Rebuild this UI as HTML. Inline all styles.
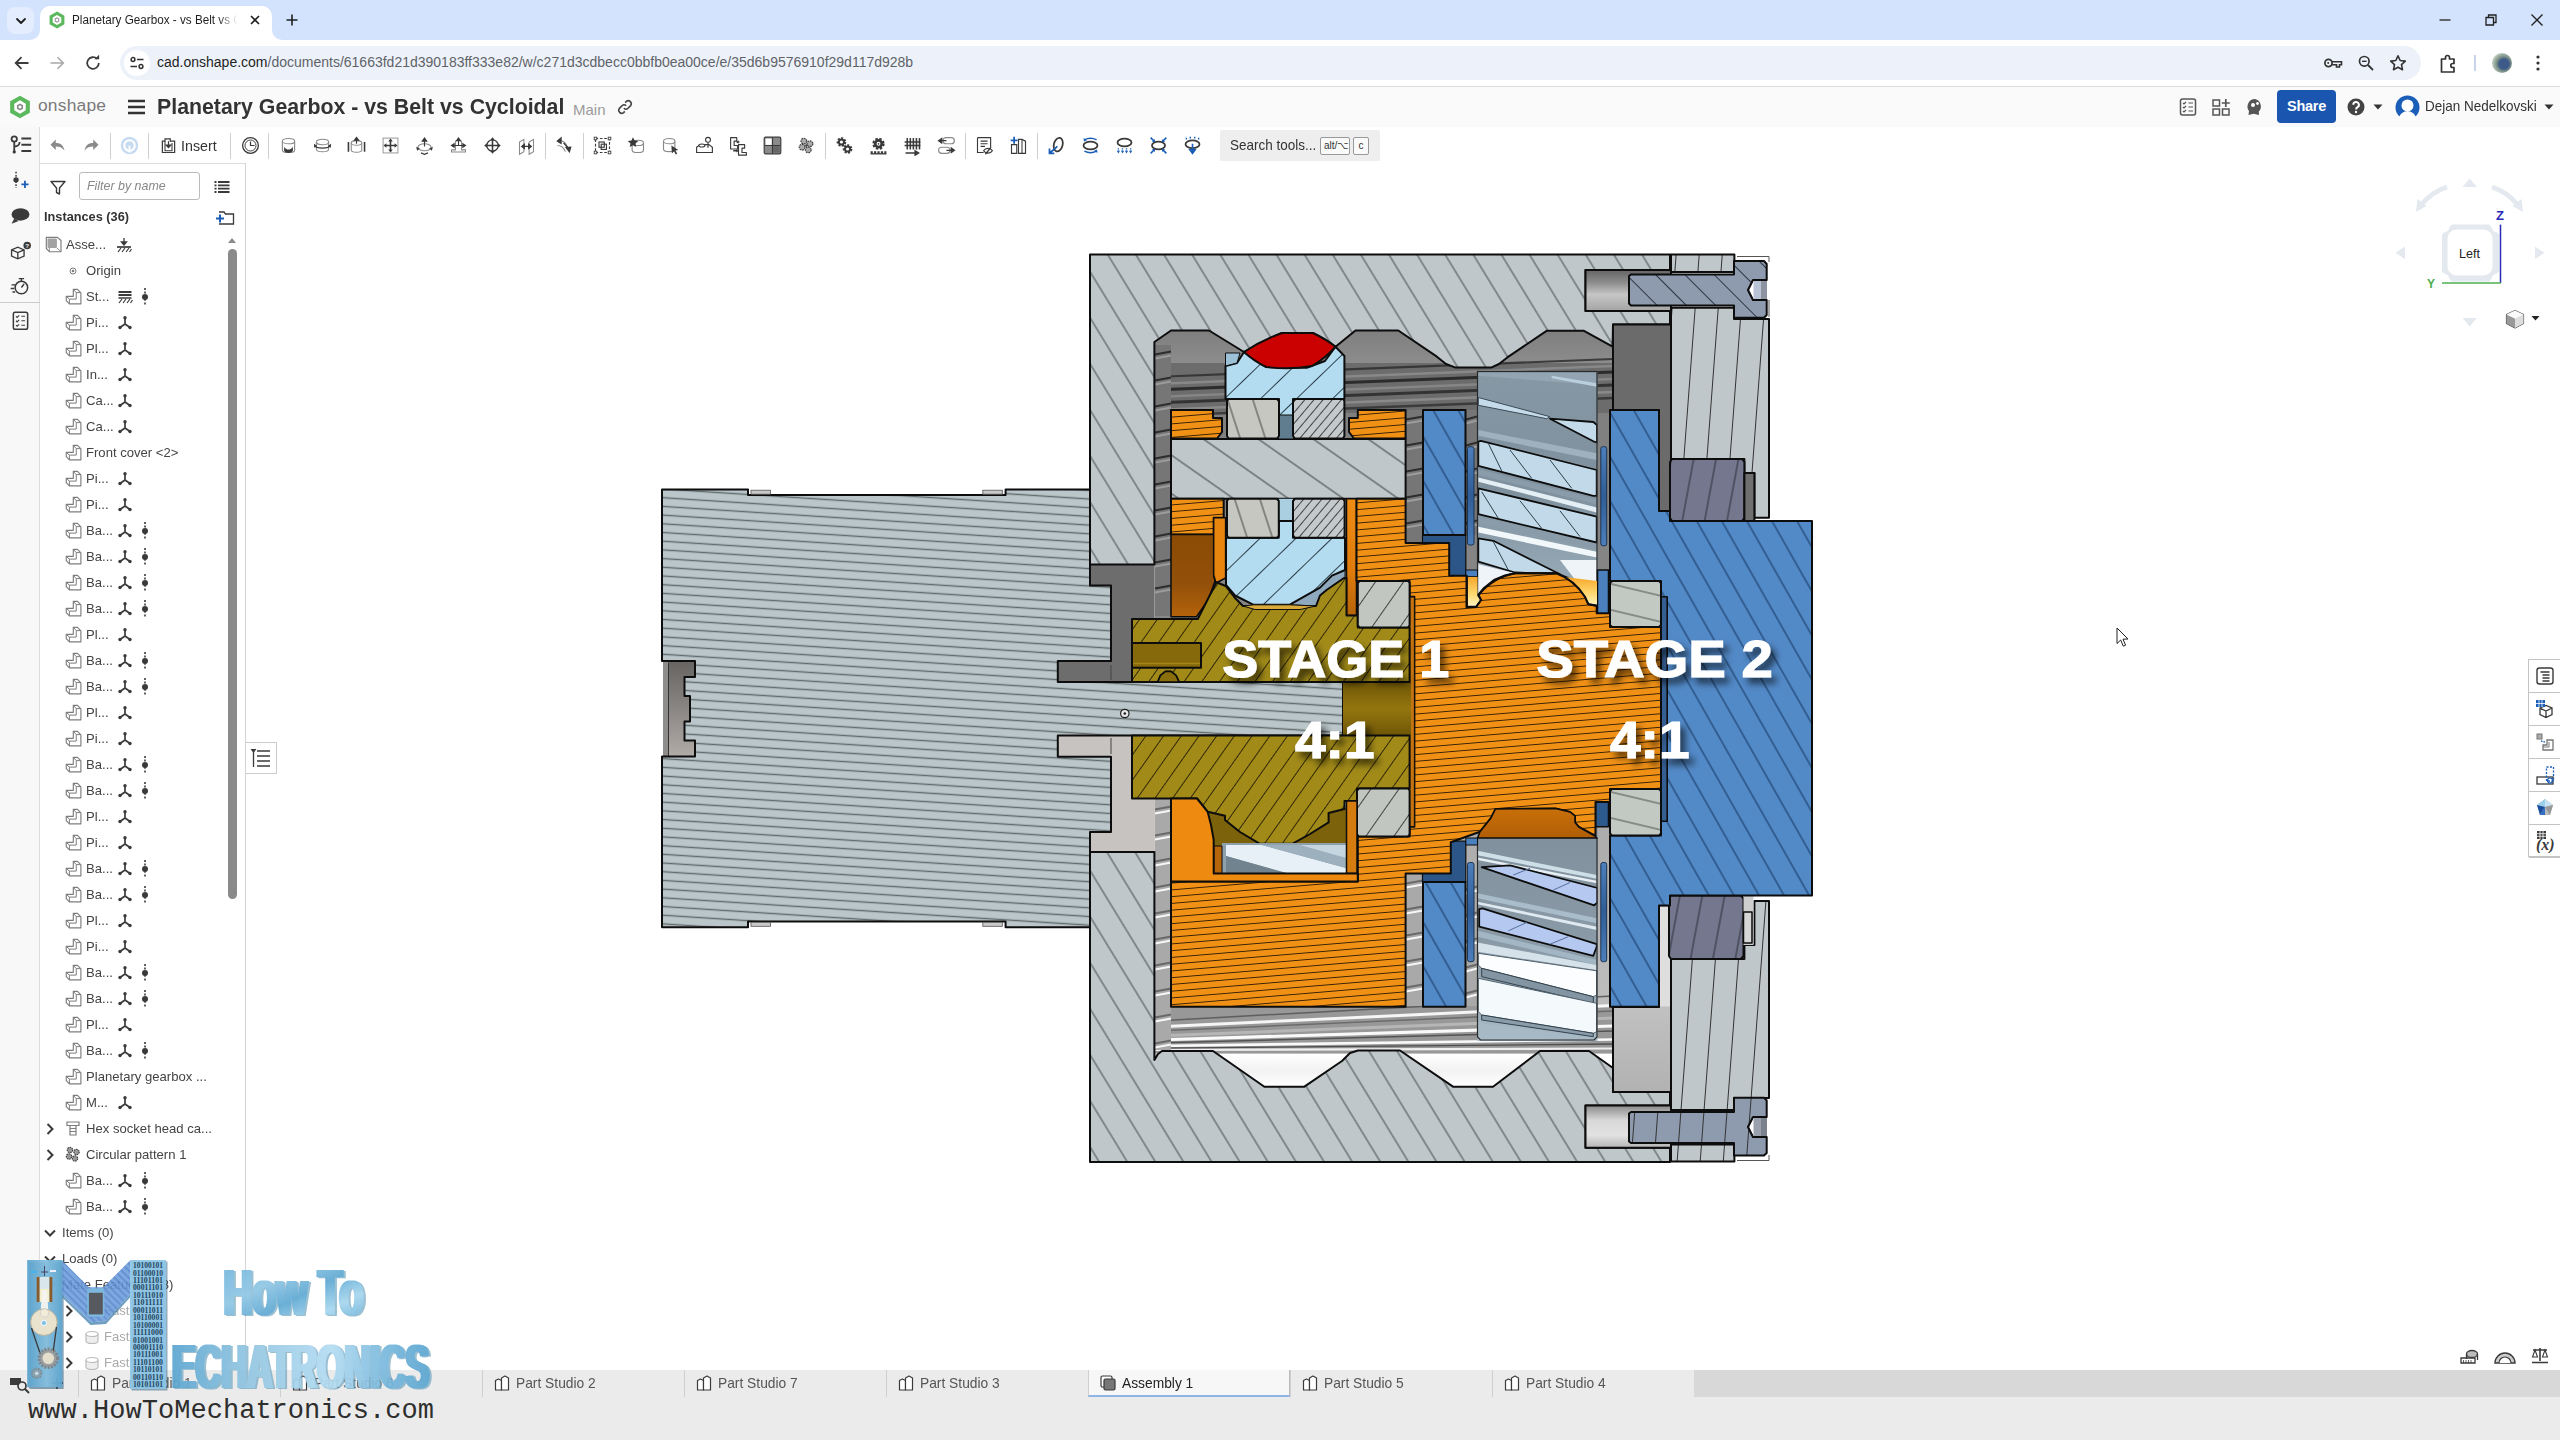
<!DOCTYPE html><html><head><meta charset="utf-8"><title>Planetary Gearbox - vs Belt vs Cycloidal</title><style>
html,body{margin:0;padding:0}
body{width:2560px;height:1440px;position:relative;overflow:hidden;background:#fff;font-family:"Liberation Sans",sans-serif;color:#333}
svg{display:block}

#tabstrip{position:absolute;left:0;top:0;width:2560px;height:40px;background:#d3e3fd}
#tabstrip .tsearch{position:absolute;left:7px;top:7px;width:27px;height:27px;border-radius:8px;background:#e4edfd;display:flex;align-items:center;justify-content:center}
#tabstrip .tab{position:absolute;left:40px;top:6px;width:232px;height:34px;background:#fff;border-radius:10px 10px 0 0}
#tabstrip .curveL{position:absolute;left:-10px;bottom:0}
#tabstrip .curveR{position:absolute;right:-10px;bottom:0}
#tabstrip .fav{position:absolute;left:8px;top:5px}
#tabstrip .ttl{position:absolute;left:32px;top:7px;font-size:12px;color:#1f1f1f;white-space:nowrap;transform-origin:0 50%;transform:scaleX(.975)}
#tabstrip .fade{position:absolute;left:178px;top:4px;width:26px;height:24px;background:linear-gradient(90deg,rgba(255,255,255,0),#fff 75%)}
#tabstrip .tx{position:absolute;left:209px;top:8px}
#tabstrip .plus{position:absolute;left:285px;top:13px}
#tabstrip .wmin{position:absolute;left:2438px;top:13px}
#tabstrip .wmax{position:absolute;left:2484px;top:13px}
#tabstrip .wcls{position:absolute;left:2530px;top:13px}
#urlrow{position:absolute;left:0;top:40px;width:2560px;height:46px;background:#fff;border-bottom:1px solid #dcdcdc}
#urlrow .nb{position:absolute;top:13px}
#urlrow .omni{position:absolute;left:120px;top:6px;width:2301px;height:34px;border-radius:17px;background:#edf2fa}
#urlrow .site{position:absolute;left:4px;top:4px;width:26px;height:26px;border-radius:13px;background:#fff;display:flex;align-items:center;justify-content:center}
#urlrow .url{position:absolute;left:37px;top:8px;font-size:14px;color:#5f6368;white-space:nowrap}
#urlrow .url b{font-weight:400;color:#1f1f1f}
#urlrow .oi{position:absolute;top:7px}
#urlrow .vsep{position:absolute;left:2474px;top:15px;width:2px;height:16px;background:#c7d4ec}
#urlrow .avatar{position:absolute;left:2492px;top:13px;width:20px;height:20px;border-radius:10px;background:radial-gradient(circle at 60% 55%,#3d5a8a 0 30%,#7a8f86 45%,#b9c9b9 70%,#8fa2a0 100%)}
#oshead{position:absolute;left:0;top:87px;width:2560px;height:40px;background:#fafafa}
#oshead .ologo{position:absolute;left:8px;top:8px}
#oshead .oname{position:absolute;left:38px;top:8px;font-size:17.4px;color:#7a7a7a;letter-spacing:0.2px}
#oshead .hamb{position:absolute;left:127px;top:11px}
#oshead .doct{position:absolute;left:157px;top:8px;font-size:21.5px;font-weight:700;color:#333;white-space:nowrap;transform-origin:0 50%;transform:scaleX(.991)}
#oshead .main{position:absolute;left:573px;top:14px;font-size:15px;color:#9a9a9a}
#oshead .lnk{position:absolute;left:617px;top:12px}
#oshead .hi{position:absolute;top:10px}
#oshead .share{position:absolute;left:2277px;top:3px;width:59px;height:33px;border-radius:4px;background:#1a55b0;color:#fff;font-weight:700;font-size:14.5px;line-height:33px;text-align:center;letter-spacing:-0.3px}
#oshead .uname{position:absolute;left:2425px;top:11px;font-size:14.5px;color:#333;white-space:nowrap;transform-origin:0 50%;transform:scaleX(.93)}

#toolbar{position:absolute;left:40px;top:127px;width:2520px;height:38px;background:#fff}
#toolbar .ti{position:absolute}
#toolbar .ti{margin-left:-40px}
#toolbar .tsep{position:absolute;top:6px;width:1px;height:26px;background:#cfcfcf;margin-left:-40px}
#toolbar .ttxt{position:absolute;top:10px;font-size:15px;color:#333;margin-left:-40px;transform-origin:0 50%;transform:scaleX(.95)}
#toolbar .stools{position:absolute;left:1180px;top:3px;width:160px;height:31px;background:#eee;border-radius:2px;font-size:14.500px;color:#333;white-space:nowrap}
#toolbar .stools span{position:absolute;left:10px;top:7px;transform-origin:0 50%;transform:scaleX(.93)}
#toolbar .stools kbd{position:absolute;top:7px;height:16px;border:1px solid #999;border-radius:2px;background:#fafafa;font-family:"Liberation Sans",sans-serif;font-size:10px;line-height:15px;padding:0 3px;color:#333}
#toolbar .stools kbd:nth-of-type(1){left:100px;width:22px}
#toolbar .stools kbd:nth-of-type(2){left:133px;width:8px;text-align:center}
#rail{position:absolute;left:0;top:127px;width:40px;height:1243px;background:#f8f8f8;border-right:1px solid #ddd;box-sizing:border-box}
#rail svg{position:absolute;left:8px;margin-top:1px}
#rail .rsep{position:absolute;left:0;top:175px;width:40px;height:1px;background:#ccc}

#side{position:absolute;left:40px;top:163px;width:205px;height:1207px;background:#fff;border-right:1px solid #d4d4d4;border-top:1px solid #ddd;box-sizing:content-box;overflow:hidden}
#side .filter{position:absolute;left:39px;top:8px;width:121px;height:28px;border:1px solid #bbb;border-radius:3px;box-sizing:border-box}
#side .filter span{position:absolute;left:7px;top:5px;font-size:13.500px;font-style:italic;color:#888;white-space:nowrap;transform-origin:0 50%;transform:scaleX(.92)}
#side .inst{position:absolute;left:4px;top:45px;font-size:13.500px;font-weight:700;color:#333;white-space:nowrap;transform-origin:0 50%;transform:scaleX(.944)}
#side .row{position:absolute;left:0;width:205px;height:26px}
#side .row .nm{position:absolute;top:5px;font-size:13.500px;color:#444;white-space:nowrap;transform-origin:0 50%;transform:scaleX(.97)}
#side .row .pi{position:absolute;left:24px;top:3px}
#side .row .ic{position:absolute}
#side .row .ch{position:absolute;left:4px;top:6px}
#side .row .chd{position:absolute;left:3px;top:7px}
#side .thumb{position:absolute;left:188px;top:85px;width:9px;height:650px;border-radius:5px;background:#8a8a8a}
#ptoggle{position:absolute;left:246px;top:742px;width:31px;height:32px;border:1px solid #ccc;border-left:none;background:#fff;box-sizing:border-box}
#ptoggle svg{position:absolute;left:4px;top:4px}

#btabs{position:absolute;left:0;top:1370px;width:2560px;height:27px;background:#d8d8d8}
#btabs:before{content:"";position:absolute;left:0;top:0;width:78px;height:27px;background:#ebebeb}
#btabs .bt{position:absolute;top:0;width:202px;height:27px;background:#ebebeb;box-sizing:border-box;border-left:1px solid #cfcfcf}
#btabs .bt svg{position:absolute;left:10px;top:4px}
#btabs .bt span{position:absolute;left:33px;top:5px;font-size:14.500px;color:#555;white-space:nowrap;transform-origin:0 50%;transform:scaleX(.951)}
#btabs .bt.act{background:#f7f7f7;border-bottom:2px solid #8fb4e6;border-right:1px solid #bbb}
#btabs .bt.act span{color:#222}
#bstrip{position:absolute;left:0;top:1397px;width:2560px;height:43px;background:#ebebeb}
#rpanel{position:absolute;left:2528px;top:659px;width:32px;height:198px;background:#fff;border:1px solid #c4c4c4;border-right:none;box-sizing:border-box}
#rpanel .rc{position:absolute;left:0;width:32px;height:33px;border-bottom:1px solid #c4c4c4;box-sizing:border-box}
#rpanel .rc svg{position:absolute;left:4px;top:4px}
</style></head><body>
<div id="tabstrip">
  <div class="tsearch"><svg width="14" height="14" viewBox="0 0 14 14"><path d="M3 5l4 4 4-4" fill="none" stroke="#1f1f1f" stroke-width="1.8" stroke-linecap="round" stroke-linejoin="round"/></svg></div>
  <div class="tab">
    <svg class="curveL" width="10" height="10" viewBox="0 0 10 10"><path d="M10 0V10H0A10 10 0 0 0 10 0Z" fill="#fff"/></svg>
    <svg class="curveR" width="10" height="10" viewBox="0 0 10 10"><path d="M0 0V10H10A10 10 0 0 1 0 0Z" fill="#fff"/></svg>
    <svg class="fav" width="18" height="18" viewBox="0 0 18 18"><polygon points="9,0.5 16.4,4.7 16.4,13.3 9,17.5 1.6,13.3 1.6,4.7" fill="#5cb85c"/><polygon points="9,4 13.3,6.5 13.3,11.5 9,14 4.7,11.5 4.7,6.5" fill="#fff"/><polygon points="9,6.3 11.3,7.6 11.3,10.4 9,11.7 6.7,10.4 6.7,7.6" fill="#9a9a9a"/><polygon points="9,7.6 10.2,8.3 10.2,9.7 9,10.4 7.8,9.7 7.8,8.3" fill="#fff"/></svg>
    <span class="ttl">Planetary Gearbox - vs Belt vs C</span>
    <span class="fade"></span>
    <svg class="tx" width="12" height="12" viewBox="0 0 12 12"><path d="M2 2l8 8M10 2l-8 8" stroke="#1f1f1f" stroke-width="1.6"/></svg>
  </div>
  <svg class="plus" width="14" height="14" viewBox="0 0 14 14"><path d="M7 1.5v11M1.5 7h11" stroke="#1f1f1f" stroke-width="1.6"/></svg>
  <svg class="wmin" width="14" height="14" viewBox="0 0 14 14"><path d="M1.5 7h11" stroke="#1f1f1f" stroke-width="1.3"/></svg>
  <svg class="wmax" width="14" height="14" viewBox="0 0 14 14"><path d="M2 4.5h7.5v7.5H2zM4.5 4.3V2h7.5v7.5H9.7" fill="none" stroke="#1f1f1f" stroke-width="1.3"/></svg>
  <svg class="wcls" width="14" height="14" viewBox="0 0 14 14"><path d="M1.5 1.5l11 11M12.5 1.5l-11 11" stroke="#1f1f1f" stroke-width="1.3"/></svg>
</div>
<div id="urlrow">
  <svg class="nb" style="left:12px" width="20" height="20" viewBox="0 0 20 20"><path d="M16.5 10H4M9.5 4.2L3.7 10l5.8 5.8" fill="none" stroke="#3c3c3c" stroke-width="1.8"/></svg>
  <svg class="nb" style="left:47px" width="20" height="20" viewBox="0 0 20 20"><path d="M3.5 10H16M10.5 4.2l5.8 5.8-5.8 5.8" fill="none" stroke="#a9a9a9" stroke-width="1.6"/></svg>
  <svg class="nb" style="left:83px" width="20" height="20" viewBox="0 0 20 20"><path d="M15.8 10a5.8 5.8 0 1 1-1.7-4.1" fill="none" stroke="#3c3c3c" stroke-width="1.8"/><path d="M11.5 6.3h4.6V1.7z" fill="#3c3c3c"/></svg>
  <div class="omni">
    <div class="site"><svg width="16" height="16" viewBox="0 0 16 16"><circle cx="4" cy="4.5" r="1.9" fill="none" stroke="#333" stroke-width="1.5"/><path d="M8 4.5h6.5" stroke="#333" stroke-width="1.5"/><circle cx="12" cy="11.5" r="1.9" fill="none" stroke="#333" stroke-width="1.5"/><path d="M1.5 11.5h6.5" stroke="#333" stroke-width="1.5"/></svg></div>
    <span class="url"><b>cad.onshape.com</b>/documents/61663fd21d390183ff333e82/w/c271d3cdbecc0bbfb0ea00ce/e/35d6b9576910f29d117d928b</span>
    <svg class="oi" style="left:2203px" width="20" height="20" viewBox="0 0 20 20"><circle cx="5.5" cy="10" r="3.6" fill="none" stroke="#333" stroke-width="1.7"/><circle cx="5.2" cy="10" r="1" fill="#333"/><path d="M9 8.7h9.5v3h-2v2.3h-3v-2.3H9" fill="none" stroke="#333" stroke-width="1.6"/></svg>
    <svg class="oi" style="left:2236px" width="20" height="20" viewBox="0 0 20 20"><circle cx="8.3" cy="8.3" r="4.8" fill="none" stroke="#333" stroke-width="1.7"/><path d="M12 12l5 5" stroke="#333" stroke-width="1.8"/><path d="M6 8.3h4.6" stroke="#333" stroke-width="1.4"/></svg>
    <svg class="oi" style="left:2268px" width="20" height="20" viewBox="0 0 20 20"><path d="M10 2.8l2.2 4.7 5.1.6-3.8 3.5 1 5.1L10 14.200l-4.500 2.500 1-5.100L2.700 8.100l5.100-.6z" fill="none" stroke="#333" stroke-width="1.6" stroke-linejoin="round"/></svg>
  </div>
  <svg class="nb" style="left:2437px" width="22" height="22" viewBox="0 0 22 22"><path d="M8.5 4.5a2 2 0 0 1 4 0V6H17v4.500h-1.200a2 2 0 0 0 0 4H17V19H4.500V6H8.500z" fill="none" stroke="#333" stroke-width="1.7" stroke-linejoin="round"/></svg>
  <div class="vsep"></div>
  <div class="avatar"></div>
  <svg class="nb" style="left:2528px" width="20" height="20" viewBox="0 0 20 20"><circle cx="10" cy="4" r="1.6" fill="#333"/><circle cx="10" cy="10" r="1.6" fill="#333"/><circle cx="10" cy="16" r="1.6" fill="#333"/></svg>
</div>


<div id="oshead">
  <svg class="ologo" width="24" height="24" viewBox="0 0 18 18"><polygon points="9,0.5 16.4,4.7 16.4,13.3 9,17.5 1.6,13.3 1.6,4.7" fill="#5cb85c"/><polygon points="9,4 13.3,6.5 13.3,11.5 9,14 4.7,11.5 4.7,6.5" fill="#fff"/><polygon points="9,6.3 11.3,7.6 11.3,10.4 9,11.7 6.7,10.4 6.7,7.6" fill="#8a8a8a"/><polygon points="9,7.7 10.1,8.35 10.1,9.65 9,10.3 7.9,9.65 7.9,8.35" fill="#fff"/></svg>
  <span class="oname">onshape</span>
  <svg class="hamb" width="20" height="18" viewBox="0 0 20 18"><path d="M1 3h17M1 9h17M1 15h17" stroke="#333" stroke-width="2.6"/></svg>
  <span class="doct">Planetary Gearbox - vs Belt vs Cycloidal</span>
  <span class="main">Main</span>
  <svg class="lnk" width="16" height="16" viewBox="0 0 16 16"><path d="M6.800 9.200a3 3 0 0 0 4.200 0l2.600-2.600a3 3 0 0 0-4.200-4.200L8.200 3.600M9.200 6.800a3 3 0 0 0-4.200 0L2.400 9.400a3 3 0 0 0 4.200 4.200l1.200-1.200" fill="none" stroke="#444" stroke-width="1.6"/></svg>
  <svg class="hi" style="left:2178px" width="20" height="20" viewBox="0 0 20 20"><rect x="2.500" y="2" width="15" height="16" rx="2" fill="none" stroke="#555" stroke-width="1.5"/><path d="M10.500 6h4.500M10.500 10h4.500M10.500 14h4.500M5 6l1 1 2-2M5 10l1 1 2-2M5 14l1 1 2-2" fill="none" stroke="#555" stroke-width="1.2"/></svg>
  <svg class="hi" style="left:2211px" width="20" height="20" viewBox="0 0 20 20"><rect x="2" y="3" width="6.500" height="6" fill="none" stroke="#555" stroke-width="1.5"/><rect x="2" y="12" width="6.500" height="6" fill="none" stroke="#555" stroke-width="1.5"/><rect x="11.500" y="12" width="6.500" height="6" fill="none" stroke="#555" stroke-width="1.5"/><path d="M14.800 2v8M10.800 6h8" stroke="#555" stroke-width="1.7"/></svg>
  <svg class="hi" style="left:2245px" width="20" height="20" viewBox="0 0 20 20"><path d="M10 2a7.500 7.500 0 0 0-6 12l-.5 4 5-1.200 5.500 1.200-.2-3.500A7.500 7.500 0 0 0 10 2z" fill="#555"/><circle cx="8" cy="8" r="2" fill="#fff"/><circle cx="12.500" cy="6.500" r="1.400" fill="#fff"/></svg>
  <div class="share">Share</div>
  <svg class="hi" style="left:2346px" width="20" height="20" viewBox="0 0 20 20"><circle cx="10" cy="10" r="8.500" fill="#444"/><path d="M7.300 7.800a2.800 2.800 0 1 1 4.200 2.400c-.9.600-1.400 1-1.400 2.200" fill="none" stroke="#fff" stroke-width="2"/><circle cx="10" cy="15" r="1.200" fill="#fff"/></svg>
  <svg class="hi" style="left:2373px;top:17px" width="10" height="6" viewBox="0 0 10 6"><path d="M0.500 0.500h9L5 5.500z" fill="#333"/></svg>
  <svg class="hi" style="left:2395px;top:8px" width="25" height="25" viewBox="0 0 25 25"><circle cx="12.500" cy="12.500" r="12" fill="#1b5eb8"/><circle cx="12.500" cy="10.500" r="6" fill="#fff"/><path d="M3.500 25a9 9 0 0 1 18 0z" fill="#fff"/></svg>
  <span class="uname">Dejan Nedelkovski</span>
  <svg class="hi" style="left:2544px;top:17px" width="10" height="6" viewBox="0 0 10 6"><path d="M0.500 0.500h9L5 5.500z" fill="#333"/></svg>
</div>
<div id="toolbar">
<svg class="ti" style="left:46.5px;top:7.5px" width="21.0" height="21.0" viewBox="0 0 24 24"><path d="M4 11l6-6v4c6 0 9 3 10 9-2-3.500-5-5-10-5v4z" fill="#8a8a8a"/></svg>
<svg class="ti" style="left:80.5px;top:7.5px" width="21.0" height="21.0" viewBox="0 0 24 24"><path d="M20 11l-6-6v4c-6 0-9 3-10 9 2-3.500 5-5 10-5v4z" fill="#8a8a8a"/></svg>
<div class="tsep" style="left:110px"></div>
<svg class="ti" style="left:118.5px;top:7.5px" width="21.0" height="21.0" viewBox="0 0 24 24"><circle cx="12" cy="12" r="10" fill="#c6dbf1"/><circle cx="12" cy="12" r="6" fill="none" stroke="#fff" stroke-width="2.4"/><path d="M12 12v7l-3-2" fill="none" stroke="#fff" stroke-width="2"/></svg>
<div class="tsep" style="left:148px"></div>
<svg class="ti" style="left:157.5px;top:7.5px" width="21.0" height="21.0" viewBox="0 0 24 24"><path d="M5 7h3V4.500h6V7h5v13H5z" fill="none" stroke="#3a3a3a" stroke-width="1.4"/><path d="M8 7v11h8V9" fill="none" stroke="#3a3a3a" stroke-width="1.2"/><path d="M12 7v7M9.300 11.500l2.700 3 2.700-3z" fill="#3a3a3a" stroke="#3a3a3a" stroke-width="1.4"/></svg>
<span class="ttxt" style="left:181px">Insert</span>
<div class="tsep" style="left:230px"></div>
<svg class="ti" style="left:239.5px;top:7.5px" width="21.0" height="21.0" viewBox="0 0 24 24"><circle cx="12" cy="12" r="9" fill="none" stroke="#3a3a3a" stroke-width="1.5"/><circle cx="12" cy="12" r="6.300" fill="none" stroke="#3a3a3a" stroke-width="1.100"/><path d="M12 7.500V12h4.500" fill="none" stroke="#3a3a3a" stroke-width="1.4"/></svg>
<div class="tsep" style="left:268px"></div>
<svg class="ti" style="left:277.5px;top:7.5px" width="21.0" height="21.0" viewBox="0 0 24 24"><path d="M5 7v10a7.0 3 0 0 0 14 0v-10" fill="#fff" stroke="#8a8a8a" stroke-width="1.3"/><ellipse cx="12.0" cy="7" rx="7.0" ry="3" fill="#fff" stroke="#8a8a8a" stroke-width="1.3"/><path d="M7 13c1 2.500 3 3.500 5 3.500s4-1 5-3.500v5c-1 2-3 2.500-5 2.500s-4-.500-5-2.500z" fill="#3a3a3a"/></svg>
<svg class="ti" style="left:311.5px;top:7.5px" width="21.0" height="21.0" viewBox="0 0 24 24"><ellipse cx="12" cy="8" rx="7" ry="3.200" fill="#fff" stroke="#8a8a8a" stroke-width="1.2"/><path d="M5 8v8a7 3.200 0 0 0 14 0V8" fill="none" stroke="#8a8a8a" stroke-width="1.2"/><path d="M3 12c2 4 16 4 18 0" fill="none" stroke="#3a3a3a" stroke-width="1.6"/><path d="M2.200 10l.3 4.500 3.500-2zM21.800 10l-.3 4.500-3.500-2z" fill="#3a3a3a"/></svg>
<svg class="ti" style="left:345.5px;top:7.5px" width="21.0" height="21.0" viewBox="0 0 24 24"><path d="M6 9v8a6 2.600 0 0 0 12 0V9" fill="#fff" stroke="#8a8a8a" stroke-width="1.2"/><ellipse cx="12" cy="9" rx="6" ry="2.600" fill="#fff" stroke="#8a8a8a" stroke-width="1.2"/><path d="M12 10V3.500M9.500 6L12 2.800 14.500 6z" fill="#3a3a3a" stroke="#3a3a3a" stroke-width="1.3"/><path d="M2.800 8v11M21.200 8v11" stroke="#3a3a3a" stroke-width="1.8"/></svg>
<svg class="ti" style="left:379.5px;top:7.5px" width="21.0" height="21.0" viewBox="0 0 24 24"><rect x="3.500" y="3.500" width="17" height="17" fill="none" stroke="#8a8a8a" stroke-width="1"/><path d="M5.5 12H18.5M12 5.5V18.5" stroke="#3a3a3a" stroke-width="1.8"/><path d="M20.0 12.0l-3.3800000000000003 -2.6v5.2z" fill="#3a3a3a"/><path d="M4.0 12.0l3.3800000000000003 -2.6v5.2z" fill="#3a3a3a"/><path d="M12.0 20.0l-2.6 -3.3800000000000003h5.2z" fill="#3a3a3a"/><path d="M12.0 4.0l-2.6 3.3800000000000003h5.2z" fill="#3a3a3a"/></svg>
<svg class="ti" style="left:413.5px;top:7.5px" width="21.0" height="21.0" viewBox="0 0 24 24"><ellipse cx="12" cy="14" rx="7.500" ry="4" fill="#fff" stroke="#8a8a8a" stroke-width="1.200"/><path d="M12 13V5M9.500 7L12 3.500 14.500 7z" fill="#3a3a3a" stroke="#3a3a3a" stroke-width="1.300"/><path d="M2.500 13.500l1 4.500 3.200-2.500zM21.500 13.500l-1 4.500-3.200-2.500z" fill="#3a3a3a"/><path d="M8 20.500l4 1.500 4-1.500" fill="none" stroke="#3a3a3a" stroke-width="1.500"/></svg>
<svg class="ti" style="left:447.5px;top:7.5px" width="21.0" height="21.0" viewBox="0 0 24 24"><path d="M4 19.500h16v-2.500h-4.500V8a3.500 2 0 0 0-7 0v9H4z" fill="#fff" stroke="#8a8a8a" stroke-width="1.200"/><path d="M12 12V4M9.800 6.500L12 3.500l2.200 3zM5 12h14M7 10l-3 2 3 2zM17 10l3 2-3 2z" fill="#3a3a3a" stroke="#3a3a3a" stroke-width="1.300"/></svg>
<svg class="ti" style="left:481.5px;top:7.5px" width="21.0" height="21.0" viewBox="0 0 24 24"><circle cx="12" cy="12" r="6.500" fill="none" stroke="#3a3a3a" stroke-width="1.400"/><path d="M4 12H20M12 4V20" stroke="#3a3a3a" stroke-width="1.8"/><path d="M21.5 12.0l-3.3800000000000003 -2.6v5.2z" fill="#3a3a3a"/><path d="M2.5 12.0l3.3800000000000003 -2.6v5.2z" fill="#3a3a3a"/><path d="M12.0 21.5l-2.6 -3.3800000000000003h5.2z" fill="#3a3a3a"/><path d="M12.0 2.5l-2.6 3.3800000000000003h5.2z" fill="#3a3a3a"/></svg>
<svg class="ti" style="left:515.5px;top:7.5px" width="21.0" height="21.0" viewBox="0 0 24 24"><path d="M4 8l5-3v14l-5 3zM15 8l5-3v14l-5 3z" fill="#fff" stroke="#8a8a8a" stroke-width="1.200"/><path d="M7 13h10M9.500 10.500L6.500 13l3 2.500zM14.500 10.500l3 2.500-3 2.500z" fill="#3a3a3a" stroke="#3a3a3a" stroke-width="1.400"/></svg>
<div class="tsep" style="left:545px"></div>
<svg class="ti" style="left:553.5px;top:7.5px" width="21.0" height="21.0" viewBox="0 0 24 24"><path d="M5 6c5 0 9 3 11 9M4 12c4 0 7 2 9 7" fill="none" stroke="#8a8a8a" stroke-width="1.200"/><path d="M4 7l4-3.500v6zM17.500 19l-3.500-4.500 5-.5zM11 9l6 7" stroke="#3a3a3a" fill="#3a3a3a" stroke-width="1.600"/></svg>
<div class="tsep" style="left:583px"></div>
<svg class="ti" style="left:591.5px;top:7.5px" width="21.0" height="21.0" viewBox="0 0 24 24"><rect x="4" y="4" width="16" height="16" fill="none" stroke="#3a3a3a" stroke-width="1.300" stroke-dasharray="3 2"/><rect x="2.500" y="2.500" width="3" height="3" fill="#fff" stroke="#3a3a3a"/><rect x="18.500" y="2.500" width="3" height="3" fill="#fff" stroke="#3a3a3a"/><rect x="2.500" y="18.500" width="3" height="3" fill="#fff" stroke="#3a3a3a"/><rect x="18.500" y="18.500" width="3" height="3" fill="#fff" stroke="#3a3a3a"/><rect x="8" y="8" width="6" height="6" fill="none" stroke="#3a3a3a" stroke-width="1.300"/><rect x="10.500" y="10.500" width="6" height="6" fill="none" stroke="#3a3a3a" stroke-width="1.300"/></svg>
<svg class="ti" style="left:625.5px;top:7.5px" width="21.0" height="21.0" viewBox="0 0 24 24"><path d="M7 9v8a6.5 3 0 0 0 13 0v-8" fill="#fff" stroke="#8a8a8a" stroke-width="1.3"/><ellipse cx="13.5" cy="9" rx="6.5" ry="3" fill="#fff" stroke="#8a8a8a" stroke-width="1.3"/><path d="M8 2.500l1.800 3.800 4.200.5-3.100 2.900.8 4.100L8 11.800l-3.700 2 .8-4.100L2 6.800l4.200-.5z" fill="#3a3a3a"/></svg>
<svg class="ti" style="left:659.5px;top:7.5px" width="21.0" height="21.0" viewBox="0 0 24 24"><path d="M4 7v9a6.5 3 0 0 0 13 0v-9" fill="#fff" stroke="#8a8a8a" stroke-width="1.3"/><ellipse cx="10.5" cy="7" rx="6.5" ry="3" fill="#fff" stroke="#8a8a8a" stroke-width="1.3"/><path d="M13 12l8 5-3.300.8 2 3.500-1.700.9-2-3.500-2.400 2.300z" fill="#3a3a3a"/></svg>
<svg class="ti" style="left:693.5px;top:7.5px" width="21.0" height="21.0" viewBox="0 0 24 24"><path d="M3 14l4-3h10l4 3v6H3z" fill="#fff" stroke="#3a3a3a" stroke-width="1.300"/><ellipse cx="9" cy="12" rx="3.500" ry="1.800" fill="#fff" stroke="#3a3a3a" stroke-width="1.200"/><circle cx="16" cy="5.500" r="2.800" fill="#fff" stroke="#3a3a3a" stroke-width="1.300"/><path d="M16 8.500v6" stroke="#3a3a3a" stroke-width="1.400"/></svg>
<svg class="ti" style="left:727.5px;top:7.5px" width="21.0" height="21.0" viewBox="0 0 24 24"><path d="M3 3h7v4H7v5h4v4H3zM12 11h7v4h-3v5h5v3h-9z" fill="#fff" stroke="#3a3a3a" stroke-width="1.300" stroke-linejoin="round"/><path d="M6 18h5M13 8h-3" stroke="#3a3a3a" stroke-width="1.500"/><path d="M9.500 16l2.500 2-2.500 2zM12 6l-2.500 2 2.500 2z" fill="#3a3a3a"/></svg>
<svg class="ti" style="left:761.5px;top:7.5px" width="21.0" height="21.0" viewBox="0 0 24 24"><rect x="2.500" y="2.500" width="19" height="19" rx="1.500" fill="#8a8a8a" stroke="#3a3a3a" stroke-width="1.300"/><rect x="4" y="4" width="7.300" height="7.300" fill="#fff"/><path d="M12 3v18M3 12h18" stroke="#3a3a3a" stroke-width="1.300"/><rect x="12.700" y="12.700" width="7.500" height="7.500" fill="#666"/></svg>
<svg class="ti" style="left:795.5px;top:7.5px" width="21.0" height="21.0" viewBox="0 0 24 24"><circle cx="9" cy="7" r="3.300" fill="#aaa" stroke="#3a3a3a" stroke-width="1.300" stroke-dasharray="2 1"/><circle cx="16" cy="10" r="3.300" fill="#aaa" stroke="#3a3a3a" stroke-width="1.300" stroke-dasharray="2 1"/><circle cx="7" cy="14" r="3.300" fill="#aaa" stroke="#3a3a3a" stroke-width="1.300" stroke-dasharray="2 1"/><circle cx="14" cy="17" r="3.300" fill="#aaa" stroke="#3a3a3a" stroke-width="1.300" stroke-dasharray="2 1"/><circle cx="12" cy="12" r="1.500" fill="#3a3a3a"/></svg>
<div class="tsep" style="left:825px"></div>
<svg class="ti" style="left:833.5px;top:7.5px" width="21.0" height="21.0" viewBox="0 0 24 24"><circle cx="8.500" cy="8" r="4" fill="#3a3a3a" stroke="#3a3a3a" stroke-width="3" stroke-dasharray="2.100 1.500"/><circle cx="8.500" cy="8" r="1.800" fill="#fff"/><circle cx="15.500" cy="16" r="4" fill="#3a3a3a" stroke="#3a3a3a" stroke-width="3" stroke-dasharray="2.100 1.500"/><circle cx="15.500" cy="16" r="1.800" fill="#fff"/></svg>
<svg class="ti" style="left:867.5px;top:7.5px" width="21.0" height="21.0" viewBox="0 0 24 24"><circle cx="12" cy="10" r="5.300" fill="#3a3a3a" stroke="#3a3a3a" stroke-width="3.400" stroke-dasharray="2.500 1.700"/><circle cx="12" cy="10" r="2.200" fill="#fff"/><circle cx="12" cy="10" r="1" fill="#3a3a3a"/><path d="M3 20h18" stroke="#3a3a3a" stroke-width="2.600" stroke-dasharray="2.500 1.400"/><path d="M3 21.500h18" stroke="#3a3a3a" stroke-width="1.500"/></svg>
<svg class="ti" style="left:901.5px;top:7.5px" width="21.0" height="21.0" viewBox="0 0 24 24"><path d="M3 8h18M3 12h18" stroke="#3a3a3a" stroke-width="1.500"/><path d="M6 3.500v13" stroke="#3a3a3a" stroke-width="1.800"/><path d="M9.5 3.500v13" stroke="#3a3a3a" stroke-width="1.800"/><path d="M13 3.500v13" stroke="#3a3a3a" stroke-width="1.800"/><path d="M16.5 3.500v13" stroke="#3a3a3a" stroke-width="1.800"/><path d="M20 3.500v13" stroke="#3a3a3a" stroke-width="1.800"/><path d="M4 20.500h13M15 18l4 2.500-4 2.500z" stroke="#3a3a3a" fill="#3a3a3a" stroke-width="1.600"/></svg>
<svg class="ti" style="left:935.5px;top:7.5px" width="21.0" height="21.0" viewBox="0 0 24 24"><rect x="8" y="3" width="13" height="7" rx="3.500" fill="#fff" stroke="#8a8a8a" stroke-width="1.300"/><rect x="3" y="14" width="13" height="7" rx="3.500" fill="#fff" stroke="#8a8a8a" stroke-width="1.300"/><path d="M4 6.500h8M6.500 4L3 6.500 6.500 9zM12 17.500h8M17.500 15l3.500 2.500-3.500 2.500z" fill="#3a3a3a" stroke="#3a3a3a" stroke-width="1.500"/></svg>
<div class="tsep" style="left:965px"></div>
<svg class="ti" style="left:973.5px;top:7.5px" width="21.0" height="21.0" viewBox="0 0 24 24"><path d="M4 3h15v11M4 3v17h7" fill="none" stroke="#3a3a3a" stroke-width="1.300"/><path d="M7.500 7h8M7.500 10h8M7.500 13h5" stroke="#3a3a3a" stroke-width="1.300"/><path d="M11 18c2-3.500 8-3.500 10 0-2 3.500-8 3.500-10 0zM13 22l6.500-8" fill="none" stroke="#3a3a3a" stroke-width="1.400"/></svg>
<svg class="ti" style="left:1007.5px;top:7.5px" width="21.0" height="21.0" viewBox="0 0 24 24"><path d="M4 11h6v10H4zM12 5h4l4 2v14h-8z" fill="#fff" stroke="#3a3a3a" stroke-width="1.300"/><path d="M16 5v16" stroke="#3a3a3a" stroke-width="1.200"/><path d="M7 2v8M3 6h8" stroke="#1b5eb8" stroke-width="2"/></svg>
<div class="tsep" style="left:1037px"></div>
<svg class="ti" style="left:1045.5px;top:7.5px" width="21.0" height="21.0" viewBox="0 0 24 24"><ellipse cx="14" cy="11" rx="5" ry="8" fill="none" stroke="#3a3a3a" stroke-width="2" transform="rotate(15 14 11)"/><path d="M13 13l-8 7M4 15.500v5.500h5.500" fill="none" stroke="#1b5eb8" stroke-width="2"/></svg>
<svg class="ti" style="left:1079.5px;top:7.5px" width="21.0" height="21.0" viewBox="0 0 24 24"><ellipse cx="12" cy="12" rx="8" ry="4.500" fill="none" stroke="#3a3a3a" stroke-width="2"/><path d="M5 5.500c4-2 10-2 14 0M19 18.500c-4 2-10 2-14 0" fill="none" stroke="#1b5eb8" stroke-width="1.600"/><path d="M4 3.500l.5 4 3.500-1.500zM20 20.500l-.5-4-3.500 1.500z" fill="#1b5eb8"/></svg>
<svg class="ti" style="left:1113.5px;top:7.5px" width="21.0" height="21.0" viewBox="0 0 24 24"><ellipse cx="12" cy="8.500" rx="8" ry="4.500" fill="none" stroke="#3a3a3a" stroke-width="2"/><path d="M5 15v3" stroke="#1b5eb8" stroke-width="1.500" stroke-dasharray="1.500 1"/><path d="M3.2 18h3.600l-1.800 3z" fill="#1b5eb8"/><path d="M9.7 15v3" stroke="#1b5eb8" stroke-width="1.500" stroke-dasharray="1.500 1"/><path d="M7.8999999999999995 18h3.600l-1.800 3z" fill="#1b5eb8"/><path d="M14.3 15v3" stroke="#1b5eb8" stroke-width="1.500" stroke-dasharray="1.500 1"/><path d="M12.5 18h3.600l-1.800 3z" fill="#1b5eb8"/><path d="M19 15v3" stroke="#1b5eb8" stroke-width="1.500" stroke-dasharray="1.500 1"/><path d="M17.2 18h3.600l-1.800 3z" fill="#1b5eb8"/></svg>
<svg class="ti" style="left:1147.5px;top:7.5px" width="21.0" height="21.0" viewBox="0 0 24 24"><ellipse cx="12" cy="12" rx="7.500" ry="4.500" fill="none" stroke="#3a3a3a" stroke-width="2"/><path d="M3 3l4 4M21 3l-4 4M3 21l4-4M21 21l-4-4" stroke="#1b5eb8" stroke-width="1.700"/><path d="M8 4.500V8H4.500zM16 4.500V8h3.500zM8 19.500V16H4.500zM16 19.500V16h3.500z" fill="#1b5eb8"/></svg>
<svg class="ti" style="left:1181.5px;top:7.5px" width="21.0" height="21.0" viewBox="0 0 24 24"><ellipse cx="12" cy="10.500" rx="8" ry="4.500" fill="none" stroke="#3a3a3a" stroke-width="2"/><path d="M5 3v2M9.500 2v2M14.500 2v2M19 3v2" stroke="#1b5eb8" stroke-width="1.600"/><path d="M12 10v8M9 17h6l-3 4z" stroke="#1b5eb8" fill="#1b5eb8" stroke-width="1.800"/></svg>
<div class="stools"><span>Search tools...</span><kbd>alt/&#8997;</kbd><kbd>c</kbd></div>
</div>
<div id="rail">
<svg style="top:6px" width="25" height="21.500" viewBox="0 0 28 24"><circle cx="7" cy="5.500" r="3" fill="none" stroke="#3a3a3a" stroke-width="2"/><path d="M7 8.500v12M7 14c0 0 6 0 6-5" fill="none" stroke="#3a3a3a" stroke-width="2"/><circle cx="7" cy="20" r="1.800" fill="#3a3a3a"/><path d="M15 5h11M15 12h11M15 19h11" stroke="#3a3a3a" stroke-width="2.400"/></svg>
<svg style="top:42px" width="25" height="21.500" viewBox="0 0 28 24"><path d="M9 2v18" stroke="#3a3a3a" stroke-width="1.600" stroke-dasharray="2 1.500"/><circle cx="9" cy="11" r="3" fill="#3a3a3a"/><path d="M15 16h8M19 12v8" stroke="#1b5eb8" stroke-width="2"/></svg>
<svg style="top:77px" width="25" height="21.500" viewBox="0 0 28 24"><ellipse cx="14" cy="10.500" rx="10" ry="7" fill="#3a3a3a"/><path d="M7 15l-3 6 8-3z" fill="#3a3a3a"/></svg>
<svg style="top:112px" width="25" height="21.500" viewBox="0 0 28 24"><path d="M4 11l7-3 7 3v7l-7 3-7-3zM4 11l7 3 7-3M11 14v7" fill="none" stroke="#3a3a3a" stroke-width="1.500"/><circle cx="21.500" cy="6" r="4.200" fill="#3a3a3a"/><text x="21.500" y="8.700" font-size="7" font-weight="700" fill="#fff" text-anchor="middle" font-family="Liberation Sans,sans-serif">?</text></svg>
<svg style="top:147px" width="25" height="21.500" viewBox="0 0 28 24"><circle cx="15" cy="14" r="7" fill="none" stroke="#3a3a3a" stroke-width="1.700"/><path d="M15 14l3-4M12 4h6M15 4v3M4 11h4M3 15h4M5 19h3" stroke="#3a3a3a" stroke-width="1.600" fill="none"/></svg>
<div class="rsep"></div>
<svg style="top:182px" width="25" height="21.500" viewBox="0 0 28 24"><rect x="6" y="2.500" width="16" height="19" rx="2" fill="none" stroke="#3a3a3a" stroke-width="1.700"/><path d="M15 7h4M15 12h4M15 17h4M9 7l1.200 1.200L12.500 6M9 12l1.200 1.200 2.300-2.200M9 17l1.200 1.200 2.300-2.200" fill="none" stroke="#3a3a3a" stroke-width="1.300"/></svg>
</div><div id="side">
<svg style="position:absolute;left:9px;top:15px" width="18" height="18" viewBox="0 0 18 18"><path d="M2 2.500h14l-5.500 6.500v6l-3-1.500v-4.500z" fill="none" stroke="#3a3a3a" stroke-width="1.400" stroke-linejoin="round"/></svg>
<div class="filter"><span>Filter by name</span></div>
<svg style="position:absolute;left:174px;top:16px" width="16" height="14" viewBox="0 0 16 14"><path d="M4 2h11.500M4 5.300h11.500M4 8.600h11.500M4 12h11.500" stroke="#3a3a3a" stroke-width="1.800"/><path d="M0.500 2h2M0.500 5.300h2M0.500 8.600h2M0.500 12h2" stroke="#3a3a3a" stroke-width="1.800"/></svg>
<div class="inst">Instances (36)</div>
<svg style="position:absolute;left:175px;top:45px" width="20" height="17" viewBox="0 0 20 17"><path d="M4 3h5l1.500 2H18.500v10H4" fill="none" stroke="#3a3a3a" stroke-width="1.300"/><path d="M1 9.500h8M5 5.500v8" stroke="#1b5eb8" stroke-width="2"/></svg>
<div class="row" style="top:68px"><svg class="pi" style="left:4px" width="18" height="18" viewBox="0 0 18 18"><path d="M2.300 2.300H13.500L17 5.500V16.700H5.400L2.300 13.500z" fill="#fff" stroke="#7d7d7d" stroke-width="1.150" stroke-linejoin="round"/><rect x="3.500" y="3.500" width="9.400" height="9.400" rx="1" fill="#a3a3a3"/><path d="M5.400 16.700V13M12.900 12.900L17 16.700" stroke="#7d7d7d" stroke-width=".8" fill="none"/></svg><span class="nm" style="left:26px">Asse...</span><span class="ic" style="left:76px;top:5px"><svg class="mi" width="16" height="16" viewBox="0 0 16 16"><path d="M8 1v6M5.500 5L8 8l2.500-3z" fill="#3a3a3a" stroke="#3a3a3a" stroke-width="1.300"/><path d="M1 10h14" stroke="#3a3a3a" stroke-width="1.700"/><path d="M2 15l3-4M6 15l3-4M10 15l3-4M13.500 15l2-3" stroke="#3a3a3a" stroke-width="1.200"/></svg></span></div>
<div class="row" style="top:94px"><svg style="position:absolute;left:29px;top:9px" width="8" height="8" viewBox="0 0 8 8"><circle cx="4" cy="4" r="3" fill="none" stroke="#7d7d7d" stroke-width="1"/><circle cx="4" cy="4" r="1.300" fill="#7d7d7d"/></svg><span class="nm" style="left:46px">Origin</span></div>
<div class="row" style="top:120px"><svg class="pi" width="18" height="18" viewBox="0 0 18 18"><path d="M9.300 2.400H13.500L16.900 5.900V16.800H5.400L2.250 13.700V9.300H9.300z" fill="#fff" stroke="#7d7d7d" stroke-width="1.150" stroke-linejoin="round"/><path d="M5.400 16.800V12.100H12.250V5.600M9.300 2.400L12.250 5.600M2.250 9.300L5.400 12.100M12.250 5.600H16.500" fill="none" stroke="#7d7d7d" stroke-width="1"/></svg><span class="nm" style="left:46px">St...</span><span class="ic" style="left:77px;top:5px"><svg class="mi" width="16" height="16" viewBox="0 0 16 16"><path d="M1.500 3h13M1.500 6h13" stroke="#3a3a3a" stroke-width="2"/><path d="M1.500 9h13" stroke="#3a3a3a" stroke-width="1.500"/><path d="M2 14l3-4M6 14l3-4M10 14l3-4M13.500 14l2-3" stroke="#3a3a3a" stroke-width="1.200"/></svg></span><span class="ic" style="left:100px;top:3px"><svg class="di" width="10" height="20" viewBox="0 0 10 20"><path d="M5 1v18" stroke="#3a3a3a" stroke-width="1.600" stroke-dasharray="2 1.600"/><circle cx="5" cy="10" r="3" fill="#3a3a3a"/></svg></span></div>
<div class="row" style="top:146px"><svg class="pi" width="18" height="18" viewBox="0 0 18 18"><path d="M9.300 2.400H13.500L16.900 5.900V16.800H5.400L2.250 13.700V9.300H9.300z" fill="#fff" stroke="#7d7d7d" stroke-width="1.150" stroke-linejoin="round"/><path d="M5.400 16.800V12.100H12.250V5.600M9.300 2.400L12.250 5.600M2.250 9.300L5.400 12.100M12.250 5.600H16.500" fill="none" stroke="#7d7d7d" stroke-width="1"/></svg><span class="nm" style="left:46px">Pi...</span><span class="ic" style="left:77px;top:5px"><svg class="mi" width="16" height="16" viewBox="0 0 16 16"><path d="M8 2.500V9M8 9l-5 3.500M8 9l5 3.500" stroke="#3a3a3a" stroke-width="1.700" fill="none"/><circle cx="8" cy="2.800" r="1.700" fill="#3a3a3a"/><circle cx="3" cy="12.500" r="1.700" fill="#3a3a3a"/><circle cx="13" cy="12.500" r="1.700" fill="#3a3a3a"/></svg></span></div>
<div class="row" style="top:172px"><svg class="pi" width="18" height="18" viewBox="0 0 18 18"><path d="M9.300 2.400H13.500L16.900 5.900V16.800H5.400L2.250 13.700V9.300H9.300z" fill="#fff" stroke="#7d7d7d" stroke-width="1.150" stroke-linejoin="round"/><path d="M5.400 16.800V12.100H12.250V5.600M9.300 2.400L12.250 5.600M2.250 9.300L5.400 12.100M12.250 5.600H16.500" fill="none" stroke="#7d7d7d" stroke-width="1"/></svg><span class="nm" style="left:46px">Pl...</span><span class="ic" style="left:77px;top:5px"><svg class="mi" width="16" height="16" viewBox="0 0 16 16"><path d="M8 2.500V9M8 9l-5 3.500M8 9l5 3.500" stroke="#3a3a3a" stroke-width="1.700" fill="none"/><circle cx="8" cy="2.800" r="1.700" fill="#3a3a3a"/><circle cx="3" cy="12.500" r="1.700" fill="#3a3a3a"/><circle cx="13" cy="12.500" r="1.700" fill="#3a3a3a"/></svg></span></div>
<div class="row" style="top:198px"><svg class="pi" width="18" height="18" viewBox="0 0 18 18"><path d="M9.300 2.400H13.500L16.900 5.900V16.800H5.400L2.250 13.700V9.300H9.300z" fill="#fff" stroke="#7d7d7d" stroke-width="1.150" stroke-linejoin="round"/><path d="M5.400 16.800V12.100H12.250V5.600M9.300 2.400L12.250 5.600M2.250 9.300L5.400 12.100M12.250 5.600H16.500" fill="none" stroke="#7d7d7d" stroke-width="1"/></svg><span class="nm" style="left:46px">In...</span><span class="ic" style="left:77px;top:5px"><svg class="mi" width="16" height="16" viewBox="0 0 16 16"><path d="M8 2.500V9M8 9l-5 3.500M8 9l5 3.500" stroke="#3a3a3a" stroke-width="1.700" fill="none"/><circle cx="8" cy="2.800" r="1.700" fill="#3a3a3a"/><circle cx="3" cy="12.500" r="1.700" fill="#3a3a3a"/><circle cx="13" cy="12.500" r="1.700" fill="#3a3a3a"/></svg></span></div>
<div class="row" style="top:224px"><svg class="pi" width="18" height="18" viewBox="0 0 18 18"><path d="M9.300 2.400H13.500L16.900 5.900V16.800H5.400L2.250 13.700V9.300H9.300z" fill="#fff" stroke="#7d7d7d" stroke-width="1.150" stroke-linejoin="round"/><path d="M5.400 16.800V12.100H12.250V5.600M9.300 2.400L12.250 5.600M2.250 9.300L5.400 12.100M12.250 5.600H16.500" fill="none" stroke="#7d7d7d" stroke-width="1"/></svg><span class="nm" style="left:46px">Ca...</span><span class="ic" style="left:77px;top:5px"><svg class="mi" width="16" height="16" viewBox="0 0 16 16"><path d="M8 2.500V9M8 9l-5 3.500M8 9l5 3.500" stroke="#3a3a3a" stroke-width="1.700" fill="none"/><circle cx="8" cy="2.800" r="1.700" fill="#3a3a3a"/><circle cx="3" cy="12.500" r="1.700" fill="#3a3a3a"/><circle cx="13" cy="12.500" r="1.700" fill="#3a3a3a"/></svg></span></div>
<div class="row" style="top:250px"><svg class="pi" width="18" height="18" viewBox="0 0 18 18"><path d="M9.300 2.400H13.500L16.900 5.900V16.800H5.400L2.250 13.700V9.300H9.300z" fill="#fff" stroke="#7d7d7d" stroke-width="1.150" stroke-linejoin="round"/><path d="M5.400 16.800V12.100H12.250V5.600M9.300 2.400L12.250 5.600M2.250 9.300L5.400 12.100M12.250 5.600H16.500" fill="none" stroke="#7d7d7d" stroke-width="1"/></svg><span class="nm" style="left:46px">Ca...</span><span class="ic" style="left:77px;top:5px"><svg class="mi" width="16" height="16" viewBox="0 0 16 16"><path d="M8 2.500V9M8 9l-5 3.500M8 9l5 3.500" stroke="#3a3a3a" stroke-width="1.700" fill="none"/><circle cx="8" cy="2.800" r="1.700" fill="#3a3a3a"/><circle cx="3" cy="12.500" r="1.700" fill="#3a3a3a"/><circle cx="13" cy="12.500" r="1.700" fill="#3a3a3a"/></svg></span></div>
<div class="row" style="top:276px"><svg class="pi" width="18" height="18" viewBox="0 0 18 18"><path d="M9.300 2.400H13.500L16.900 5.900V16.800H5.400L2.250 13.700V9.300H9.300z" fill="#fff" stroke="#7d7d7d" stroke-width="1.150" stroke-linejoin="round"/><path d="M5.400 16.800V12.100H12.250V5.600M9.300 2.400L12.250 5.600M2.250 9.300L5.400 12.100M12.250 5.600H16.500" fill="none" stroke="#7d7d7d" stroke-width="1"/></svg><span class="nm" style="left:46px">Front cover &lt;2&gt;</span></div>
<div class="row" style="top:302px"><svg class="pi" width="18" height="18" viewBox="0 0 18 18"><path d="M9.300 2.400H13.500L16.900 5.900V16.800H5.400L2.250 13.700V9.300H9.300z" fill="#fff" stroke="#7d7d7d" stroke-width="1.150" stroke-linejoin="round"/><path d="M5.400 16.800V12.100H12.250V5.600M9.300 2.400L12.250 5.600M2.250 9.300L5.400 12.100M12.250 5.600H16.500" fill="none" stroke="#7d7d7d" stroke-width="1"/></svg><span class="nm" style="left:46px">Pi...</span><span class="ic" style="left:77px;top:5px"><svg class="mi" width="16" height="16" viewBox="0 0 16 16"><path d="M8 2.500V9M8 9l-5 3.500M8 9l5 3.500" stroke="#3a3a3a" stroke-width="1.700" fill="none"/><circle cx="8" cy="2.800" r="1.700" fill="#3a3a3a"/><circle cx="3" cy="12.500" r="1.700" fill="#3a3a3a"/><circle cx="13" cy="12.500" r="1.700" fill="#3a3a3a"/></svg></span></div>
<div class="row" style="top:328px"><svg class="pi" width="18" height="18" viewBox="0 0 18 18"><path d="M9.300 2.400H13.500L16.900 5.900V16.800H5.400L2.250 13.700V9.300H9.300z" fill="#fff" stroke="#7d7d7d" stroke-width="1.150" stroke-linejoin="round"/><path d="M5.400 16.800V12.100H12.250V5.600M9.300 2.400L12.250 5.600M2.250 9.300L5.400 12.100M12.250 5.600H16.500" fill="none" stroke="#7d7d7d" stroke-width="1"/></svg><span class="nm" style="left:46px">Pi...</span><span class="ic" style="left:77px;top:5px"><svg class="mi" width="16" height="16" viewBox="0 0 16 16"><path d="M8 2.500V9M8 9l-5 3.500M8 9l5 3.500" stroke="#3a3a3a" stroke-width="1.700" fill="none"/><circle cx="8" cy="2.800" r="1.700" fill="#3a3a3a"/><circle cx="3" cy="12.500" r="1.700" fill="#3a3a3a"/><circle cx="13" cy="12.500" r="1.700" fill="#3a3a3a"/></svg></span></div>
<div class="row" style="top:354px"><svg class="pi" width="18" height="18" viewBox="0 0 18 18"><path d="M9.300 2.400H13.500L16.900 5.900V16.800H5.400L2.250 13.700V9.300H9.300z" fill="#fff" stroke="#7d7d7d" stroke-width="1.150" stroke-linejoin="round"/><path d="M5.400 16.800V12.100H12.250V5.600M9.300 2.400L12.250 5.600M2.250 9.300L5.400 12.100M12.250 5.600H16.500" fill="none" stroke="#7d7d7d" stroke-width="1"/></svg><span class="nm" style="left:46px">Ba...</span><span class="ic" style="left:77px;top:5px"><svg class="mi" width="16" height="16" viewBox="0 0 16 16"><path d="M8 2.500V9M8 9l-5 3.500M8 9l5 3.500" stroke="#3a3a3a" stroke-width="1.700" fill="none"/><circle cx="8" cy="2.800" r="1.700" fill="#3a3a3a"/><circle cx="3" cy="12.500" r="1.700" fill="#3a3a3a"/><circle cx="13" cy="12.500" r="1.700" fill="#3a3a3a"/></svg></span><span class="ic" style="left:100px;top:3px"><svg class="di" width="10" height="20" viewBox="0 0 10 20"><path d="M5 1v18" stroke="#3a3a3a" stroke-width="1.600" stroke-dasharray="2 1.600"/><circle cx="5" cy="10" r="3" fill="#3a3a3a"/></svg></span></div>
<div class="row" style="top:380px"><svg class="pi" width="18" height="18" viewBox="0 0 18 18"><path d="M9.300 2.400H13.500L16.900 5.900V16.800H5.400L2.250 13.700V9.300H9.300z" fill="#fff" stroke="#7d7d7d" stroke-width="1.150" stroke-linejoin="round"/><path d="M5.400 16.800V12.100H12.250V5.600M9.300 2.400L12.250 5.600M2.250 9.300L5.400 12.100M12.250 5.600H16.500" fill="none" stroke="#7d7d7d" stroke-width="1"/></svg><span class="nm" style="left:46px">Ba...</span><span class="ic" style="left:77px;top:5px"><svg class="mi" width="16" height="16" viewBox="0 0 16 16"><path d="M8 2.500V9M8 9l-5 3.500M8 9l5 3.500" stroke="#3a3a3a" stroke-width="1.700" fill="none"/><circle cx="8" cy="2.800" r="1.700" fill="#3a3a3a"/><circle cx="3" cy="12.500" r="1.700" fill="#3a3a3a"/><circle cx="13" cy="12.500" r="1.700" fill="#3a3a3a"/></svg></span><span class="ic" style="left:100px;top:3px"><svg class="di" width="10" height="20" viewBox="0 0 10 20"><path d="M5 1v18" stroke="#3a3a3a" stroke-width="1.600" stroke-dasharray="2 1.600"/><circle cx="5" cy="10" r="3" fill="#3a3a3a"/></svg></span></div>
<div class="row" style="top:406px"><svg class="pi" width="18" height="18" viewBox="0 0 18 18"><path d="M9.300 2.400H13.500L16.900 5.900V16.800H5.400L2.250 13.700V9.300H9.300z" fill="#fff" stroke="#7d7d7d" stroke-width="1.150" stroke-linejoin="round"/><path d="M5.400 16.800V12.100H12.250V5.600M9.300 2.400L12.250 5.600M2.250 9.300L5.400 12.100M12.250 5.600H16.500" fill="none" stroke="#7d7d7d" stroke-width="1"/></svg><span class="nm" style="left:46px">Ba...</span><span class="ic" style="left:77px;top:5px"><svg class="mi" width="16" height="16" viewBox="0 0 16 16"><path d="M8 2.500V9M8 9l-5 3.500M8 9l5 3.500" stroke="#3a3a3a" stroke-width="1.700" fill="none"/><circle cx="8" cy="2.800" r="1.700" fill="#3a3a3a"/><circle cx="3" cy="12.500" r="1.700" fill="#3a3a3a"/><circle cx="13" cy="12.500" r="1.700" fill="#3a3a3a"/></svg></span><span class="ic" style="left:100px;top:3px"><svg class="di" width="10" height="20" viewBox="0 0 10 20"><path d="M5 1v18" stroke="#3a3a3a" stroke-width="1.600" stroke-dasharray="2 1.600"/><circle cx="5" cy="10" r="3" fill="#3a3a3a"/></svg></span></div>
<div class="row" style="top:432px"><svg class="pi" width="18" height="18" viewBox="0 0 18 18"><path d="M9.300 2.400H13.500L16.900 5.900V16.800H5.400L2.250 13.700V9.300H9.300z" fill="#fff" stroke="#7d7d7d" stroke-width="1.150" stroke-linejoin="round"/><path d="M5.400 16.800V12.100H12.250V5.600M9.300 2.400L12.250 5.600M2.250 9.300L5.400 12.100M12.250 5.600H16.500" fill="none" stroke="#7d7d7d" stroke-width="1"/></svg><span class="nm" style="left:46px">Ba...</span><span class="ic" style="left:77px;top:5px"><svg class="mi" width="16" height="16" viewBox="0 0 16 16"><path d="M8 2.500V9M8 9l-5 3.500M8 9l5 3.500" stroke="#3a3a3a" stroke-width="1.700" fill="none"/><circle cx="8" cy="2.800" r="1.700" fill="#3a3a3a"/><circle cx="3" cy="12.500" r="1.700" fill="#3a3a3a"/><circle cx="13" cy="12.500" r="1.700" fill="#3a3a3a"/></svg></span><span class="ic" style="left:100px;top:3px"><svg class="di" width="10" height="20" viewBox="0 0 10 20"><path d="M5 1v18" stroke="#3a3a3a" stroke-width="1.600" stroke-dasharray="2 1.600"/><circle cx="5" cy="10" r="3" fill="#3a3a3a"/></svg></span></div>
<div class="row" style="top:458px"><svg class="pi" width="18" height="18" viewBox="0 0 18 18"><path d="M9.300 2.400H13.500L16.900 5.900V16.800H5.400L2.250 13.700V9.300H9.300z" fill="#fff" stroke="#7d7d7d" stroke-width="1.150" stroke-linejoin="round"/><path d="M5.400 16.800V12.100H12.250V5.600M9.300 2.400L12.250 5.600M2.250 9.300L5.400 12.100M12.250 5.600H16.500" fill="none" stroke="#7d7d7d" stroke-width="1"/></svg><span class="nm" style="left:46px">Pl...</span><span class="ic" style="left:77px;top:5px"><svg class="mi" width="16" height="16" viewBox="0 0 16 16"><path d="M8 2.500V9M8 9l-5 3.500M8 9l5 3.500" stroke="#3a3a3a" stroke-width="1.700" fill="none"/><circle cx="8" cy="2.800" r="1.700" fill="#3a3a3a"/><circle cx="3" cy="12.500" r="1.700" fill="#3a3a3a"/><circle cx="13" cy="12.500" r="1.700" fill="#3a3a3a"/></svg></span></div>
<div class="row" style="top:484px"><svg class="pi" width="18" height="18" viewBox="0 0 18 18"><path d="M9.300 2.400H13.500L16.900 5.900V16.800H5.400L2.250 13.700V9.300H9.300z" fill="#fff" stroke="#7d7d7d" stroke-width="1.150" stroke-linejoin="round"/><path d="M5.400 16.800V12.100H12.250V5.600M9.300 2.400L12.250 5.600M2.250 9.300L5.400 12.100M12.250 5.600H16.500" fill="none" stroke="#7d7d7d" stroke-width="1"/></svg><span class="nm" style="left:46px">Ba...</span><span class="ic" style="left:77px;top:5px"><svg class="mi" width="16" height="16" viewBox="0 0 16 16"><path d="M8 2.500V9M8 9l-5 3.500M8 9l5 3.500" stroke="#3a3a3a" stroke-width="1.700" fill="none"/><circle cx="8" cy="2.800" r="1.700" fill="#3a3a3a"/><circle cx="3" cy="12.500" r="1.700" fill="#3a3a3a"/><circle cx="13" cy="12.500" r="1.700" fill="#3a3a3a"/></svg></span><span class="ic" style="left:100px;top:3px"><svg class="di" width="10" height="20" viewBox="0 0 10 20"><path d="M5 1v18" stroke="#3a3a3a" stroke-width="1.600" stroke-dasharray="2 1.600"/><circle cx="5" cy="10" r="3" fill="#3a3a3a"/></svg></span></div>
<div class="row" style="top:510px"><svg class="pi" width="18" height="18" viewBox="0 0 18 18"><path d="M9.300 2.400H13.500L16.900 5.900V16.800H5.400L2.250 13.700V9.300H9.300z" fill="#fff" stroke="#7d7d7d" stroke-width="1.150" stroke-linejoin="round"/><path d="M5.400 16.800V12.100H12.250V5.600M9.300 2.400L12.250 5.600M2.250 9.300L5.400 12.100M12.250 5.600H16.500" fill="none" stroke="#7d7d7d" stroke-width="1"/></svg><span class="nm" style="left:46px">Ba...</span><span class="ic" style="left:77px;top:5px"><svg class="mi" width="16" height="16" viewBox="0 0 16 16"><path d="M8 2.500V9M8 9l-5 3.500M8 9l5 3.500" stroke="#3a3a3a" stroke-width="1.700" fill="none"/><circle cx="8" cy="2.800" r="1.700" fill="#3a3a3a"/><circle cx="3" cy="12.500" r="1.700" fill="#3a3a3a"/><circle cx="13" cy="12.500" r="1.700" fill="#3a3a3a"/></svg></span><span class="ic" style="left:100px;top:3px"><svg class="di" width="10" height="20" viewBox="0 0 10 20"><path d="M5 1v18" stroke="#3a3a3a" stroke-width="1.600" stroke-dasharray="2 1.600"/><circle cx="5" cy="10" r="3" fill="#3a3a3a"/></svg></span></div>
<div class="row" style="top:536px"><svg class="pi" width="18" height="18" viewBox="0 0 18 18"><path d="M9.300 2.400H13.500L16.900 5.900V16.800H5.400L2.250 13.700V9.300H9.300z" fill="#fff" stroke="#7d7d7d" stroke-width="1.150" stroke-linejoin="round"/><path d="M5.400 16.800V12.100H12.250V5.600M9.300 2.400L12.250 5.600M2.250 9.300L5.400 12.100M12.250 5.600H16.500" fill="none" stroke="#7d7d7d" stroke-width="1"/></svg><span class="nm" style="left:46px">Pl...</span><span class="ic" style="left:77px;top:5px"><svg class="mi" width="16" height="16" viewBox="0 0 16 16"><path d="M8 2.500V9M8 9l-5 3.500M8 9l5 3.500" stroke="#3a3a3a" stroke-width="1.700" fill="none"/><circle cx="8" cy="2.800" r="1.700" fill="#3a3a3a"/><circle cx="3" cy="12.500" r="1.700" fill="#3a3a3a"/><circle cx="13" cy="12.500" r="1.700" fill="#3a3a3a"/></svg></span></div>
<div class="row" style="top:562px"><svg class="pi" width="18" height="18" viewBox="0 0 18 18"><path d="M9.300 2.400H13.500L16.900 5.900V16.800H5.400L2.250 13.700V9.300H9.300z" fill="#fff" stroke="#7d7d7d" stroke-width="1.150" stroke-linejoin="round"/><path d="M5.400 16.800V12.100H12.250V5.600M9.300 2.400L12.250 5.600M2.250 9.300L5.400 12.100M12.250 5.600H16.500" fill="none" stroke="#7d7d7d" stroke-width="1"/></svg><span class="nm" style="left:46px">Pi...</span><span class="ic" style="left:77px;top:5px"><svg class="mi" width="16" height="16" viewBox="0 0 16 16"><path d="M8 2.500V9M8 9l-5 3.500M8 9l5 3.500" stroke="#3a3a3a" stroke-width="1.700" fill="none"/><circle cx="8" cy="2.800" r="1.700" fill="#3a3a3a"/><circle cx="3" cy="12.500" r="1.700" fill="#3a3a3a"/><circle cx="13" cy="12.500" r="1.700" fill="#3a3a3a"/></svg></span></div>
<div class="row" style="top:588px"><svg class="pi" width="18" height="18" viewBox="0 0 18 18"><path d="M9.300 2.400H13.500L16.900 5.900V16.800H5.400L2.250 13.700V9.300H9.300z" fill="#fff" stroke="#7d7d7d" stroke-width="1.150" stroke-linejoin="round"/><path d="M5.400 16.800V12.100H12.250V5.600M9.300 2.400L12.250 5.600M2.250 9.300L5.400 12.100M12.250 5.600H16.500" fill="none" stroke="#7d7d7d" stroke-width="1"/></svg><span class="nm" style="left:46px">Ba...</span><span class="ic" style="left:77px;top:5px"><svg class="mi" width="16" height="16" viewBox="0 0 16 16"><path d="M8 2.500V9M8 9l-5 3.500M8 9l5 3.500" stroke="#3a3a3a" stroke-width="1.700" fill="none"/><circle cx="8" cy="2.800" r="1.700" fill="#3a3a3a"/><circle cx="3" cy="12.500" r="1.700" fill="#3a3a3a"/><circle cx="13" cy="12.500" r="1.700" fill="#3a3a3a"/></svg></span><span class="ic" style="left:100px;top:3px"><svg class="di" width="10" height="20" viewBox="0 0 10 20"><path d="M5 1v18" stroke="#3a3a3a" stroke-width="1.600" stroke-dasharray="2 1.600"/><circle cx="5" cy="10" r="3" fill="#3a3a3a"/></svg></span></div>
<div class="row" style="top:614px"><svg class="pi" width="18" height="18" viewBox="0 0 18 18"><path d="M9.300 2.400H13.500L16.900 5.900V16.800H5.400L2.250 13.700V9.300H9.300z" fill="#fff" stroke="#7d7d7d" stroke-width="1.150" stroke-linejoin="round"/><path d="M5.400 16.800V12.100H12.250V5.600M9.300 2.400L12.250 5.600M2.250 9.300L5.400 12.100M12.250 5.600H16.500" fill="none" stroke="#7d7d7d" stroke-width="1"/></svg><span class="nm" style="left:46px">Ba...</span><span class="ic" style="left:77px;top:5px"><svg class="mi" width="16" height="16" viewBox="0 0 16 16"><path d="M8 2.500V9M8 9l-5 3.500M8 9l5 3.500" stroke="#3a3a3a" stroke-width="1.700" fill="none"/><circle cx="8" cy="2.800" r="1.700" fill="#3a3a3a"/><circle cx="3" cy="12.500" r="1.700" fill="#3a3a3a"/><circle cx="13" cy="12.500" r="1.700" fill="#3a3a3a"/></svg></span><span class="ic" style="left:100px;top:3px"><svg class="di" width="10" height="20" viewBox="0 0 10 20"><path d="M5 1v18" stroke="#3a3a3a" stroke-width="1.600" stroke-dasharray="2 1.600"/><circle cx="5" cy="10" r="3" fill="#3a3a3a"/></svg></span></div>
<div class="row" style="top:640px"><svg class="pi" width="18" height="18" viewBox="0 0 18 18"><path d="M9.300 2.400H13.500L16.900 5.900V16.800H5.400L2.250 13.700V9.300H9.300z" fill="#fff" stroke="#7d7d7d" stroke-width="1.150" stroke-linejoin="round"/><path d="M5.400 16.800V12.100H12.250V5.600M9.300 2.400L12.250 5.600M2.250 9.300L5.400 12.100M12.250 5.600H16.500" fill="none" stroke="#7d7d7d" stroke-width="1"/></svg><span class="nm" style="left:46px">Pl...</span><span class="ic" style="left:77px;top:5px"><svg class="mi" width="16" height="16" viewBox="0 0 16 16"><path d="M8 2.500V9M8 9l-5 3.500M8 9l5 3.500" stroke="#3a3a3a" stroke-width="1.700" fill="none"/><circle cx="8" cy="2.800" r="1.700" fill="#3a3a3a"/><circle cx="3" cy="12.500" r="1.700" fill="#3a3a3a"/><circle cx="13" cy="12.500" r="1.700" fill="#3a3a3a"/></svg></span></div>
<div class="row" style="top:666px"><svg class="pi" width="18" height="18" viewBox="0 0 18 18"><path d="M9.300 2.400H13.500L16.900 5.900V16.800H5.400L2.250 13.700V9.300H9.300z" fill="#fff" stroke="#7d7d7d" stroke-width="1.150" stroke-linejoin="round"/><path d="M5.400 16.800V12.100H12.250V5.600M9.300 2.400L12.250 5.600M2.250 9.300L5.400 12.100M12.250 5.600H16.500" fill="none" stroke="#7d7d7d" stroke-width="1"/></svg><span class="nm" style="left:46px">Pi...</span><span class="ic" style="left:77px;top:5px"><svg class="mi" width="16" height="16" viewBox="0 0 16 16"><path d="M8 2.500V9M8 9l-5 3.500M8 9l5 3.500" stroke="#3a3a3a" stroke-width="1.700" fill="none"/><circle cx="8" cy="2.800" r="1.700" fill="#3a3a3a"/><circle cx="3" cy="12.500" r="1.700" fill="#3a3a3a"/><circle cx="13" cy="12.500" r="1.700" fill="#3a3a3a"/></svg></span></div>
<div class="row" style="top:692px"><svg class="pi" width="18" height="18" viewBox="0 0 18 18"><path d="M9.300 2.400H13.500L16.900 5.900V16.800H5.400L2.250 13.700V9.300H9.300z" fill="#fff" stroke="#7d7d7d" stroke-width="1.150" stroke-linejoin="round"/><path d="M5.400 16.800V12.100H12.250V5.600M9.300 2.400L12.250 5.600M2.250 9.300L5.400 12.100M12.250 5.600H16.500" fill="none" stroke="#7d7d7d" stroke-width="1"/></svg><span class="nm" style="left:46px">Ba...</span><span class="ic" style="left:77px;top:5px"><svg class="mi" width="16" height="16" viewBox="0 0 16 16"><path d="M8 2.500V9M8 9l-5 3.500M8 9l5 3.500" stroke="#3a3a3a" stroke-width="1.700" fill="none"/><circle cx="8" cy="2.800" r="1.700" fill="#3a3a3a"/><circle cx="3" cy="12.500" r="1.700" fill="#3a3a3a"/><circle cx="13" cy="12.500" r="1.700" fill="#3a3a3a"/></svg></span><span class="ic" style="left:100px;top:3px"><svg class="di" width="10" height="20" viewBox="0 0 10 20"><path d="M5 1v18" stroke="#3a3a3a" stroke-width="1.600" stroke-dasharray="2 1.600"/><circle cx="5" cy="10" r="3" fill="#3a3a3a"/></svg></span></div>
<div class="row" style="top:718px"><svg class="pi" width="18" height="18" viewBox="0 0 18 18"><path d="M9.300 2.400H13.500L16.900 5.900V16.800H5.400L2.250 13.700V9.300H9.300z" fill="#fff" stroke="#7d7d7d" stroke-width="1.150" stroke-linejoin="round"/><path d="M5.400 16.800V12.100H12.250V5.600M9.300 2.400L12.250 5.600M2.250 9.300L5.400 12.100M12.250 5.600H16.500" fill="none" stroke="#7d7d7d" stroke-width="1"/></svg><span class="nm" style="left:46px">Ba...</span><span class="ic" style="left:77px;top:5px"><svg class="mi" width="16" height="16" viewBox="0 0 16 16"><path d="M8 2.500V9M8 9l-5 3.500M8 9l5 3.500" stroke="#3a3a3a" stroke-width="1.700" fill="none"/><circle cx="8" cy="2.800" r="1.700" fill="#3a3a3a"/><circle cx="3" cy="12.500" r="1.700" fill="#3a3a3a"/><circle cx="13" cy="12.500" r="1.700" fill="#3a3a3a"/></svg></span><span class="ic" style="left:100px;top:3px"><svg class="di" width="10" height="20" viewBox="0 0 10 20"><path d="M5 1v18" stroke="#3a3a3a" stroke-width="1.600" stroke-dasharray="2 1.600"/><circle cx="5" cy="10" r="3" fill="#3a3a3a"/></svg></span></div>
<div class="row" style="top:744px"><svg class="pi" width="18" height="18" viewBox="0 0 18 18"><path d="M9.300 2.400H13.500L16.900 5.900V16.800H5.400L2.250 13.700V9.300H9.300z" fill="#fff" stroke="#7d7d7d" stroke-width="1.150" stroke-linejoin="round"/><path d="M5.400 16.800V12.100H12.250V5.600M9.300 2.400L12.250 5.600M2.250 9.300L5.400 12.100M12.250 5.600H16.500" fill="none" stroke="#7d7d7d" stroke-width="1"/></svg><span class="nm" style="left:46px">Pl...</span><span class="ic" style="left:77px;top:5px"><svg class="mi" width="16" height="16" viewBox="0 0 16 16"><path d="M8 2.500V9M8 9l-5 3.500M8 9l5 3.500" stroke="#3a3a3a" stroke-width="1.700" fill="none"/><circle cx="8" cy="2.800" r="1.700" fill="#3a3a3a"/><circle cx="3" cy="12.500" r="1.700" fill="#3a3a3a"/><circle cx="13" cy="12.500" r="1.700" fill="#3a3a3a"/></svg></span></div>
<div class="row" style="top:770px"><svg class="pi" width="18" height="18" viewBox="0 0 18 18"><path d="M9.300 2.400H13.500L16.900 5.900V16.800H5.400L2.250 13.700V9.300H9.300z" fill="#fff" stroke="#7d7d7d" stroke-width="1.150" stroke-linejoin="round"/><path d="M5.400 16.800V12.100H12.250V5.600M9.300 2.400L12.250 5.600M2.250 9.300L5.400 12.100M12.250 5.600H16.500" fill="none" stroke="#7d7d7d" stroke-width="1"/></svg><span class="nm" style="left:46px">Pi...</span><span class="ic" style="left:77px;top:5px"><svg class="mi" width="16" height="16" viewBox="0 0 16 16"><path d="M8 2.500V9M8 9l-5 3.500M8 9l5 3.500" stroke="#3a3a3a" stroke-width="1.700" fill="none"/><circle cx="8" cy="2.800" r="1.700" fill="#3a3a3a"/><circle cx="3" cy="12.500" r="1.700" fill="#3a3a3a"/><circle cx="13" cy="12.500" r="1.700" fill="#3a3a3a"/></svg></span></div>
<div class="row" style="top:796px"><svg class="pi" width="18" height="18" viewBox="0 0 18 18"><path d="M9.300 2.400H13.500L16.900 5.900V16.800H5.400L2.250 13.700V9.300H9.300z" fill="#fff" stroke="#7d7d7d" stroke-width="1.150" stroke-linejoin="round"/><path d="M5.400 16.800V12.100H12.250V5.600M9.300 2.400L12.250 5.600M2.250 9.300L5.400 12.100M12.250 5.600H16.500" fill="none" stroke="#7d7d7d" stroke-width="1"/></svg><span class="nm" style="left:46px">Ba...</span><span class="ic" style="left:77px;top:5px"><svg class="mi" width="16" height="16" viewBox="0 0 16 16"><path d="M8 2.500V9M8 9l-5 3.500M8 9l5 3.500" stroke="#3a3a3a" stroke-width="1.700" fill="none"/><circle cx="8" cy="2.800" r="1.700" fill="#3a3a3a"/><circle cx="3" cy="12.500" r="1.700" fill="#3a3a3a"/><circle cx="13" cy="12.500" r="1.700" fill="#3a3a3a"/></svg></span><span class="ic" style="left:100px;top:3px"><svg class="di" width="10" height="20" viewBox="0 0 10 20"><path d="M5 1v18" stroke="#3a3a3a" stroke-width="1.600" stroke-dasharray="2 1.600"/><circle cx="5" cy="10" r="3" fill="#3a3a3a"/></svg></span></div>
<div class="row" style="top:822px"><svg class="pi" width="18" height="18" viewBox="0 0 18 18"><path d="M9.300 2.400H13.500L16.900 5.900V16.800H5.400L2.250 13.700V9.300H9.300z" fill="#fff" stroke="#7d7d7d" stroke-width="1.150" stroke-linejoin="round"/><path d="M5.400 16.800V12.100H12.250V5.600M9.300 2.400L12.250 5.600M2.250 9.300L5.400 12.100M12.250 5.600H16.500" fill="none" stroke="#7d7d7d" stroke-width="1"/></svg><span class="nm" style="left:46px">Ba...</span><span class="ic" style="left:77px;top:5px"><svg class="mi" width="16" height="16" viewBox="0 0 16 16"><path d="M8 2.500V9M8 9l-5 3.500M8 9l5 3.500" stroke="#3a3a3a" stroke-width="1.700" fill="none"/><circle cx="8" cy="2.800" r="1.700" fill="#3a3a3a"/><circle cx="3" cy="12.500" r="1.700" fill="#3a3a3a"/><circle cx="13" cy="12.500" r="1.700" fill="#3a3a3a"/></svg></span><span class="ic" style="left:100px;top:3px"><svg class="di" width="10" height="20" viewBox="0 0 10 20"><path d="M5 1v18" stroke="#3a3a3a" stroke-width="1.600" stroke-dasharray="2 1.600"/><circle cx="5" cy="10" r="3" fill="#3a3a3a"/></svg></span></div>
<div class="row" style="top:848px"><svg class="pi" width="18" height="18" viewBox="0 0 18 18"><path d="M9.300 2.400H13.500L16.900 5.900V16.800H5.400L2.250 13.700V9.300H9.300z" fill="#fff" stroke="#7d7d7d" stroke-width="1.150" stroke-linejoin="round"/><path d="M5.400 16.800V12.100H12.250V5.600M9.300 2.400L12.250 5.600M2.250 9.300L5.400 12.100M12.250 5.600H16.500" fill="none" stroke="#7d7d7d" stroke-width="1"/></svg><span class="nm" style="left:46px">Pl...</span><span class="ic" style="left:77px;top:5px"><svg class="mi" width="16" height="16" viewBox="0 0 16 16"><path d="M8 2.500V9M8 9l-5 3.500M8 9l5 3.500" stroke="#3a3a3a" stroke-width="1.700" fill="none"/><circle cx="8" cy="2.800" r="1.700" fill="#3a3a3a"/><circle cx="3" cy="12.500" r="1.700" fill="#3a3a3a"/><circle cx="13" cy="12.500" r="1.700" fill="#3a3a3a"/></svg></span></div>
<div class="row" style="top:874px"><svg class="pi" width="18" height="18" viewBox="0 0 18 18"><path d="M9.300 2.400H13.500L16.900 5.900V16.800H5.400L2.250 13.700V9.300H9.300z" fill="#fff" stroke="#7d7d7d" stroke-width="1.150" stroke-linejoin="round"/><path d="M5.400 16.800V12.100H12.250V5.600M9.300 2.400L12.250 5.600M2.250 9.300L5.400 12.100M12.250 5.600H16.500" fill="none" stroke="#7d7d7d" stroke-width="1"/></svg><span class="nm" style="left:46px">Ba...</span><span class="ic" style="left:77px;top:5px"><svg class="mi" width="16" height="16" viewBox="0 0 16 16"><path d="M8 2.500V9M8 9l-5 3.500M8 9l5 3.500" stroke="#3a3a3a" stroke-width="1.700" fill="none"/><circle cx="8" cy="2.800" r="1.700" fill="#3a3a3a"/><circle cx="3" cy="12.500" r="1.700" fill="#3a3a3a"/><circle cx="13" cy="12.500" r="1.700" fill="#3a3a3a"/></svg></span><span class="ic" style="left:100px;top:3px"><svg class="di" width="10" height="20" viewBox="0 0 10 20"><path d="M5 1v18" stroke="#3a3a3a" stroke-width="1.600" stroke-dasharray="2 1.600"/><circle cx="5" cy="10" r="3" fill="#3a3a3a"/></svg></span></div>
<div class="row" style="top:900px"><svg class="pi" width="18" height="18" viewBox="0 0 18 18"><path d="M9.300 2.400H13.500L16.900 5.900V16.800H5.400L2.250 13.700V9.300H9.300z" fill="#fff" stroke="#7d7d7d" stroke-width="1.150" stroke-linejoin="round"/><path d="M5.400 16.800V12.100H12.250V5.600M9.300 2.400L12.250 5.600M2.250 9.300L5.400 12.100M12.250 5.600H16.500" fill="none" stroke="#7d7d7d" stroke-width="1"/></svg><span class="nm" style="left:46px">Planetary gearbox ...</span></div>
<div class="row" style="top:926px"><svg class="pi" width="18" height="18" viewBox="0 0 18 18"><path d="M9.300 2.400H13.500L16.900 5.900V16.800H5.400L2.250 13.700V9.300H9.300z" fill="#fff" stroke="#7d7d7d" stroke-width="1.150" stroke-linejoin="round"/><path d="M5.400 16.800V12.100H12.250V5.600M9.300 2.400L12.250 5.600M2.250 9.300L5.400 12.100M12.250 5.600H16.500" fill="none" stroke="#7d7d7d" stroke-width="1"/></svg><span class="nm" style="left:46px">M...</span><span class="ic" style="left:77px;top:5px"><svg class="mi" width="16" height="16" viewBox="0 0 16 16"><path d="M8 2.500V9M8 9l-5 3.500M8 9l5 3.500" stroke="#3a3a3a" stroke-width="1.700" fill="none"/><circle cx="8" cy="2.800" r="1.700" fill="#3a3a3a"/><circle cx="3" cy="12.500" r="1.700" fill="#3a3a3a"/><circle cx="13" cy="12.500" r="1.700" fill="#3a3a3a"/></svg></span></div>
<div class="row" style="top:952px"><svg class="ch" width="12" height="14" viewBox="0 0 12 14"><path d="M3.500 2l5 5-5 5" fill="none" stroke="#3a3a3a" stroke-width="2"/></svg><svg class="pi" width="18" height="18" viewBox="0 0 18 18"><path d="M3 3h12v3.500H3zM6 6.500V16h6V6.500" fill="#fff" stroke="#7d7d7d" stroke-width="1.200"/><path d="M6 9.500h6M6 12.500h6" stroke="#7d7d7d" stroke-width="1.100"/></svg><span class="nm" style="left:46px">Hex socket head ca...</span></div>
<div class="row" style="top:978px"><svg class="ch" width="12" height="14" viewBox="0 0 12 14"><path d="M3.500 2l5 5-5 5" fill="none" stroke="#3a3a3a" stroke-width="2"/></svg><svg class="pi" width="18" height="18" viewBox="0 0 18 18"><circle cx="6" cy="5" r="2.700" fill="#999" stroke="#3a3a3a" stroke-width="1.100" stroke-dasharray="1.600 .8"/><circle cx="12.5" cy="7" r="2.700" fill="#999" stroke="#3a3a3a" stroke-width="1.100" stroke-dasharray="1.600 .8"/><circle cx="5" cy="11.5" r="2.700" fill="#999" stroke="#3a3a3a" stroke-width="1.100" stroke-dasharray="1.600 .8"/><circle cx="11" cy="13.5" r="2.700" fill="#999" stroke="#3a3a3a" stroke-width="1.100" stroke-dasharray="1.600 .8"/></svg><span class="nm" style="left:46px">Circular pattern 1</span></div>
<div class="row" style="top:1004px"><svg class="pi" width="18" height="18" viewBox="0 0 18 18"><path d="M9.300 2.400H13.500L16.900 5.900V16.800H5.400L2.250 13.700V9.300H9.300z" fill="#fff" stroke="#7d7d7d" stroke-width="1.150" stroke-linejoin="round"/><path d="M5.400 16.800V12.100H12.250V5.600M9.300 2.400L12.250 5.600M2.250 9.300L5.400 12.100M12.250 5.600H16.500" fill="none" stroke="#7d7d7d" stroke-width="1"/></svg><span class="nm" style="left:46px">Ba...</span><span class="ic" style="left:77px;top:5px"><svg class="mi" width="16" height="16" viewBox="0 0 16 16"><path d="M8 2.500V9M8 9l-5 3.500M8 9l5 3.500" stroke="#3a3a3a" stroke-width="1.700" fill="none"/><circle cx="8" cy="2.800" r="1.700" fill="#3a3a3a"/><circle cx="3" cy="12.500" r="1.700" fill="#3a3a3a"/><circle cx="13" cy="12.500" r="1.700" fill="#3a3a3a"/></svg></span><span class="ic" style="left:100px;top:3px"><svg class="di" width="10" height="20" viewBox="0 0 10 20"><path d="M5 1v18" stroke="#3a3a3a" stroke-width="1.600" stroke-dasharray="2 1.600"/><circle cx="5" cy="10" r="3" fill="#3a3a3a"/></svg></span></div>
<div class="row" style="top:1030px"><svg class="pi" width="18" height="18" viewBox="0 0 18 18"><path d="M9.300 2.400H13.500L16.900 5.900V16.800H5.400L2.250 13.700V9.300H9.300z" fill="#fff" stroke="#7d7d7d" stroke-width="1.150" stroke-linejoin="round"/><path d="M5.400 16.800V12.100H12.250V5.600M9.300 2.400L12.250 5.600M2.250 9.300L5.400 12.100M12.250 5.600H16.500" fill="none" stroke="#7d7d7d" stroke-width="1"/></svg><span class="nm" style="left:46px">Ba...</span><span class="ic" style="left:77px;top:5px"><svg class="mi" width="16" height="16" viewBox="0 0 16 16"><path d="M8 2.500V9M8 9l-5 3.500M8 9l5 3.500" stroke="#3a3a3a" stroke-width="1.700" fill="none"/><circle cx="8" cy="2.800" r="1.700" fill="#3a3a3a"/><circle cx="3" cy="12.500" r="1.700" fill="#3a3a3a"/><circle cx="13" cy="12.500" r="1.700" fill="#3a3a3a"/></svg></span><span class="ic" style="left:100px;top:3px"><svg class="di" width="10" height="20" viewBox="0 0 10 20"><path d="M5 1v18" stroke="#3a3a3a" stroke-width="1.600" stroke-dasharray="2 1.600"/><circle cx="5" cy="10" r="3" fill="#3a3a3a"/></svg></span></div>
<div class="row" style="top:1056px"><svg class="chd" width="14" height="12" viewBox="0 0 14 12"><path d="M2 3.500l5 5 5-5" fill="none" stroke="#3a3a3a" stroke-width="2"/></svg><span class="nm" style="left:22px">Items (0)</span></div>
<div class="row" style="top:1082px"><svg class="chd" width="14" height="12" viewBox="0 0 14 12"><path d="M2 3.500l5 5 5-5" fill="none" stroke="#3a3a3a" stroke-width="2"/></svg><span class="nm" style="left:22px">Loads (0)</span></div>
<div class="row" style="top:1108px"><svg class="chd" width="14" height="12" viewBox="0 0 14 12"><path d="M2 3.500l5 5 5-5" fill="none" stroke="#3a3a3a" stroke-width="2"/></svg><span class="nm" style="left:22px">Mate Features (13)</span></div>
<div class="row" style="top:1134px"><svg class="ch" style="left:23px" width="12" height="14" viewBox="0 0 12 14"><path d="M3.500 2l5 5-5 5" fill="none" stroke="#3a3a3a" stroke-width="2"/></svg><svg style="position:absolute;left:43px;top:4px" width="18" height="18" viewBox="0 0 18 18"><path d="M3 6v7a6 2.500 0 0 0 12 0V6" fill="#eee" stroke="#bbb" stroke-width="1.200"/><ellipse cx="9" cy="6" rx="6" ry="2.500" fill="#fff" stroke="#bbb" stroke-width="1.200"/></svg><span class="nm" style="left:64px;color:#aaa">Fast...</span></div>
<div class="row" style="top:1160px"><svg class="ch" style="left:23px" width="12" height="14" viewBox="0 0 12 14"><path d="M3.500 2l5 5-5 5" fill="none" stroke="#3a3a3a" stroke-width="2"/></svg><svg style="position:absolute;left:43px;top:4px" width="18" height="18" viewBox="0 0 18 18"><path d="M3 6v7a6 2.500 0 0 0 12 0V6" fill="#eee" stroke="#bbb" stroke-width="1.200"/><ellipse cx="9" cy="6" rx="6" ry="2.500" fill="#fff" stroke="#bbb" stroke-width="1.200"/></svg><span class="nm" style="left:64px;color:#aaa">Fast...</span></div>
<div class="row" style="top:1186px"><svg class="ch" style="left:23px" width="12" height="14" viewBox="0 0 12 14"><path d="M3.500 2l5 5-5 5" fill="none" stroke="#3a3a3a" stroke-width="2"/></svg><svg style="position:absolute;left:43px;top:4px" width="18" height="18" viewBox="0 0 18 18"><path d="M3 6v7a6 2.500 0 0 0 12 0V6" fill="#eee" stroke="#bbb" stroke-width="1.200"/><ellipse cx="9" cy="6" rx="6" ry="2.500" fill="#fff" stroke="#bbb" stroke-width="1.200"/></svg><span class="nm" style="left:64px;color:#aaa">Fast...</span></div>
<svg style="position:absolute;left:187px;top:73px" width="10" height="7" viewBox="0 0 10 7"><path d="M1 6l4-5 4 5z" fill="#8a8a8a"/></svg>
<div class="thumb"></div>
</div>
<div id="ptoggle"><svg width="22" height="22" viewBox="0 0 22 22"><path d="M7 4h13M7 9h13M7 14h13M7 19h13" stroke="#3a3a3a" stroke-width="1.300"/><path d="M3.500 3v17" stroke="#3a3a3a" stroke-width="1.300"/><path d="M0.500 2h6l-3 4z" fill="#3a3a3a"/></svg></div><svg id="model" style="position:absolute;left:0;top:0" width="2560" height="1440" viewBox="0 0 2560 1440"><defs><pattern id="hHous" patternUnits="userSpaceOnUse" width="40" height="24.0" patternTransform="rotate(58.6) translate(0 15.137580008187001)"><line x1="-1" y1="12.0" x2="41" y2="12.0" stroke="#454b4f" stroke-width="1.15"/></pattern><pattern id="hMotor" patternUnits="userSpaceOnUse" width="40" height="8.68" patternTransform="rotate(3.68) translate(0 7.10975091313437)"><line x1="-1" y1="4.34" x2="41" y2="4.34" stroke="#626b6e" stroke-width="1.25"/></pattern><pattern id="hSun" patternUnits="userSpaceOnUse" width="40" height="14.46" patternTransform="rotate(-54.8) translate(0 8.509488312733431)"><line x1="-1" y1="7.23" x2="41" y2="7.23" stroke="#2e2606" stroke-width="1.2"/></pattern><pattern id="hOr" patternUnits="userSpaceOnUse" width="40" height="6.73" patternTransform="rotate(-4.8) translate(0 5.588020342086846)"><line x1="-1" y1="3.365" x2="41" y2="3.365" stroke="#3a2205" stroke-width="1.15"/></pattern><pattern id="hBlue" patternUnits="userSpaceOnUse" width="40" height="21.8" patternTransform="rotate(60.4) translate(0 13.754355692781786)"><line x1="-1" y1="10.9" x2="41" y2="10.9" stroke="#14345c" stroke-width="1.2"/></pattern><pattern id="hPlanet" patternUnits="userSpaceOnUse" width="40" height="25" patternTransform="rotate(-44) translate(0 0)"><line x1="-1" y1="12.5" x2="41" y2="12.5" stroke="#2c3f4a" stroke-width="1.0"/></pattern><pattern id="hPin" patternUnits="userSpaceOnUse" width="40" height="31.5" patternTransform="rotate(35) translate(0 0.16463904890878212)"><line x1="-1" y1="15.75" x2="41" y2="15.75" stroke="#3a3f42" stroke-width="1.0"/></pattern><pattern id="hCover" patternUnits="userSpaceOnUse" width="40" height="23" patternTransform="rotate(94.3) translate(0 0)"><line x1="-1" y1="11.5" x2="41" y2="11.5" stroke="#333" stroke-width="1.0"/></pattern><pattern id="hBear" patternUnits="userSpaceOnUse" width="40" height="22" patternTransform="rotate(100.5) translate(0 0)"><line x1="-1" y1="11.0" x2="41" y2="11.0" stroke="#2b2b3a" stroke-width="1.0"/></pattern><pattern id="hScrew" patternUnits="userSpaceOnUse" width="40" height="20.7" patternTransform="rotate(45) translate(0 6.753763870143747)"><line x1="-1" y1="10.35" x2="41" y2="10.35" stroke="#2d3444" stroke-width="1.0"/></pattern><pattern id="hB1" patternUnits="userSpaceOnUse" width="40" height="7" patternTransform="rotate(-50) translate(0 0)"><line x1="-1" y1="3.5" x2="41" y2="3.5" stroke="#333" stroke-width="0.9"/></pattern><pattern id="hB2" patternUnits="userSpaceOnUse" width="40" height="24" patternTransform="rotate(72) translate(0 0)"><line x1="-1" y1="12.0" x2="41" y2="12.0" stroke="#333" stroke-width="0.9"/></pattern><pattern id="hB3" patternUnits="userSpaceOnUse" width="40" height="23" patternTransform="rotate(-55) translate(0 0)"><line x1="-1" y1="11.5" x2="41" y2="11.5" stroke="#333" stroke-width="0.9"/></pattern><pattern id="hB4" patternUnits="userSpaceOnUse" width="40" height="25.3" patternTransform="rotate(13.4) translate(0 4.938044586331319)"><line x1="-1" y1="12.65" x2="41" y2="12.65" stroke="#4a4f4a" stroke-width="1.0"/></pattern><linearGradient id="gCav" x1="0" y1="0" x2="0" y2="1"><stop offset="0" stop-color="#7c7c7c"/><stop offset=".45" stop-color="#8a8a8a"/><stop offset=".6" stop-color="#a8a8a8"/><stop offset="1" stop-color="#c6c6c6"/></linearGradient>
<linearGradient id="gPock" x1="0" y1="0" x2="0" y2="1"><stop offset="0" stop-color="#7f7f7f"/><stop offset="1" stop-color="#8c8c8c"/></linearGradient>
<linearGradient id="gPockB" x1="0" y1="0" x2="0" y2="1"><stop offset="0" stop-color="#ffffff"/><stop offset=".5" stop-color="#f2f2f2"/><stop offset="1" stop-color="#ffffff"/></linearGradient>
<linearGradient id="gHole" x1="0" y1="0" x2="0" y2="1"><stop offset="0" stop-color="#646464"/><stop offset=".3" stop-color="#8c8c8c"/><stop offset=".6" stop-color="#c6c6c6"/><stop offset="1" stop-color="#a4a4a4"/></linearGradient>
<linearGradient id="gHoleB" x1="0" y1="0" x2="0" y2="1"><stop offset="0" stop-color="#8a8a8a"/><stop offset=".35" stop-color="#d8d8d8"/><stop offset=".7" stop-color="#e2e2e2"/><stop offset="1" stop-color="#b4b4b4"/></linearGradient>
<linearGradient id="gLB" x1="0" y1="0" x2="0" y2="1"><stop offset="0" stop-color="#d2d2d2"/><stop offset="1" stop-color="#b2b2b2"/></linearGradient>
<linearGradient id="gBrown" x1="0" y1="0" x2="0" y2="1"><stop offset="0" stop-color="#8a4b03"/><stop offset=".6" stop-color="#93500a"/><stop offset="1" stop-color="#b4630a"/></linearGradient>
<linearGradient id="gBore" x1="0" y1="0" x2="0" y2="1"><stop offset="0" stop-color="#6f5606"/><stop offset=".5" stop-color="#94760f"/><stop offset="1" stop-color="#6f5606"/></linearGradient>
<linearGradient id="gThin" x1="0" y1="0" x2="0" y2="1"><stop offset="0" stop-color="#ef8c14"/><stop offset=".6" stop-color="#e07c0c"/><stop offset="1" stop-color="#b8640a"/></linearGradient>
<linearGradient id="gOrD" x1="0" y1="0" x2="0" y2="1"><stop offset="0" stop-color="#c86f08"/><stop offset="1" stop-color="#b05e06"/></linearGradient>
<clipPath id="cCav"><polygon points="1154.4,342.0 1171.0,330.5 1209.0,330.5 1244.0,352.0 1282.0,333.0 1313.0,333.0 1335.5,346.7 1355.5,330.5 1398.3,330.5 1436.9,356.7 1455.0,367.4 1491.7,367.4 1507.0,357.7 1546.6,330.8 1584.0,330.8 1612.6,346.6 1613.0,1092.0 1613.0,1068.0 1589.0,1051.0 1540.0,1051.0 1493.0,1086.7 1453.0,1086.7 1400.0,1050.5 1358.0,1050.5 1342.0,1061.0 1304.4,1086.7 1264.4,1086.7 1213.0,1051.0 1162.0,1051.0 1154.4,1060.0"/></clipPath></defs><polygon points="1154.4,342.0 1171.0,330.5 1209.0,330.5 1244.0,352.0 1282.0,333.0 1313.0,333.0 1335.5,346.7 1355.5,330.5 1398.3,330.5 1436.9,356.7 1455.0,367.4 1491.7,367.4 1507.0,357.7 1546.6,330.8 1584.0,330.8 1612.6,346.6 1613.0,1092.0 1613.0,1068.0 1589.0,1051.0 1540.0,1051.0 1493.0,1086.7 1453.0,1086.7 1400.0,1050.5 1358.0,1050.5 1342.0,1061.0 1304.4,1086.7 1264.4,1086.7 1213.0,1051.0 1162.0,1051.0 1154.4,1060.0" fill="url(#gCav)" />
<polygon points="1154.4,363.0 1154.4,342.0 1171.0,330.5 1209.0,330.5 1244.0,352.0 1262.0,363.0" fill="url(#gPock)" />
<polygon points="1318.0,363.0 1335.5,346.7 1355.5,330.5 1398.3,330.5 1436.9,356.7 1448.0,363.0" fill="url(#gPock)" />
<polygon points="1499.0,363.0 1507.0,357.7 1546.6,330.8 1584.0,330.8 1612.6,346.6 1612.6,363.0" fill="url(#gPock)" />
<polygon points="1218.0,1054.0 1264.4,1086.7 1304.4,1086.7 1342.0,1061.0 1350.0,1054.0" fill="url(#gPockB)" />
<polygon points="1405.0,1054.0 1453.0,1086.7 1493.0,1086.7 1536.0,1054.0" fill="url(#gPockB)" />
<polygon points="1592.0,1054.0 1613.0,1068.0 1613.0,1054.0" fill="#fff" />
<g clip-path="url(#cCav)"><rect x="1154" y="363" width="460" height="50" fill="#6c6c6c"/><path d="M1154 377L1613 359" stroke="#2e2e2e" stroke-width="2.2" opacity=".85"/><path d="M1154 384L1613 366" stroke="#8e8e8e" stroke-width="2.5" opacity=".85"/><path d="M1154 390L1613 372" stroke="#222" stroke-width="3" opacity=".85"/><path d="M1154 397L1613 379" stroke="#8a8a8a" stroke-width="2.5" opacity=".85"/><path d="M1154 403L1613 385" stroke="#2a2a2a" stroke-width="3" opacity=".85"/><path d="M1154 410L1613 392" stroke="#909090" stroke-width="2.5" opacity=".85"/><path d="M1154 416L1613 398" stroke="#333" stroke-width="2.5" opacity=".85"/><rect x="1154" y="1006" width="460" height="47" fill="#989898"/><path d="M1155 1021L1613 996" stroke="#5c5c5c" stroke-width="1.5" opacity=".95"/><path d="M1155 1027L1613 1005.5" stroke="#fafafa" stroke-width="3" opacity=".95"/><path d="M1155 1031L1613 1011" stroke="#6a6a6a" stroke-width="1.5" opacity=".95"/><path d="M1155 1036L1613 1018" stroke="#b8b8b8" stroke-width="3" opacity=".95"/><path d="M1155 1040L1613 1026" stroke="#ffffff" stroke-width="3.2" opacity=".95"/><path d="M1155 1043L1613 1031" stroke="#505050" stroke-width="1.4" opacity=".95"/><path d="M1155 1046L1613 1039.5" stroke="#ffffff" stroke-width="2.6" opacity=".95"/><path d="M1155 1048.2L1613 1044" stroke="#4a4a4a" stroke-width="1.3" opacity=".95"/><path d="M1155 1050L1613 1048.5" stroke="#f4f4f4" stroke-width="2.2" opacity=".95"/><rect x="1155" y="345" width="16" height="271" fill="#767676"/><path d="M1155 354.5L1171 351.5" stroke="#2e2e2e" stroke-width="2.2"/><path d="M1155 358.5L1171 355.5" stroke="#9c9c9c" stroke-width="2.2"/><path d="M1155 380.5L1171 377.5" stroke="#2e2e2e" stroke-width="2.2"/><path d="M1155 384.5L1171 381.5" stroke="#9c9c9c" stroke-width="2.2"/><path d="M1155 406.5L1171 403.5" stroke="#2e2e2e" stroke-width="2.2"/><path d="M1155 410.5L1171 407.5" stroke="#9c9c9c" stroke-width="2.2"/><path d="M1155 432.5L1171 429.5" stroke="#2e2e2e" stroke-width="2.2"/><path d="M1155 436.5L1171 433.5" stroke="#9c9c9c" stroke-width="2.2"/><path d="M1155 458.5L1171 455.5" stroke="#2e2e2e" stroke-width="2.2"/><path d="M1155 462.5L1171 459.5" stroke="#9c9c9c" stroke-width="2.2"/><path d="M1155 484.5L1171 481.5" stroke="#2e2e2e" stroke-width="2.2"/><path d="M1155 488.5L1171 485.5" stroke="#9c9c9c" stroke-width="2.2"/><path d="M1155 510.5L1171 507.5" stroke="#2e2e2e" stroke-width="2.2"/><path d="M1155 514.5L1171 511.5" stroke="#9c9c9c" stroke-width="2.2"/><path d="M1155 536.5L1171 533.5" stroke="#2e2e2e" stroke-width="2.2"/><path d="M1155 540.5L1171 537.5" stroke="#9c9c9c" stroke-width="2.2"/><path d="M1155 562.5L1171 559.5" stroke="#2e2e2e" stroke-width="2.2"/><path d="M1155 566.5L1171 563.5" stroke="#9c9c9c" stroke-width="2.2"/><path d="M1155 588.5L1171 585.5" stroke="#2e2e2e" stroke-width="2.2"/><path d="M1155 592.5L1171 589.5" stroke="#9c9c9c" stroke-width="2.2"/><rect x="1155" y="800" width="16" height="250" fill="#a9a9a9"/><path d="M1155 809.5L1171 806.5" stroke="#6a6a6a" stroke-width="2.2"/><path d="M1155 813.5L1171 810.5" stroke="#f6f6f6" stroke-width="2.2"/><path d="M1155 835.5L1171 832.5" stroke="#6a6a6a" stroke-width="2.2"/><path d="M1155 839.5L1171 836.5" stroke="#f6f6f6" stroke-width="2.2"/><path d="M1155 861.5L1171 858.5" stroke="#6a6a6a" stroke-width="2.2"/><path d="M1155 865.5L1171 862.5" stroke="#f6f6f6" stroke-width="2.2"/><path d="M1155 887.5L1171 884.5" stroke="#6a6a6a" stroke-width="2.2"/><path d="M1155 891.5L1171 888.5" stroke="#f6f6f6" stroke-width="2.2"/><path d="M1155 913.5L1171 910.5" stroke="#6a6a6a" stroke-width="2.2"/><path d="M1155 917.5L1171 914.5" stroke="#f6f6f6" stroke-width="2.2"/><path d="M1155 939.5L1171 936.5" stroke="#6a6a6a" stroke-width="2.2"/><path d="M1155 943.5L1171 940.5" stroke="#f6f6f6" stroke-width="2.2"/><path d="M1155 965.5L1171 962.5" stroke="#6a6a6a" stroke-width="2.2"/><path d="M1155 969.5L1171 966.5" stroke="#f6f6f6" stroke-width="2.2"/><path d="M1155 991.5L1171 988.5" stroke="#6a6a6a" stroke-width="2.2"/><path d="M1155 995.5L1171 992.5" stroke="#f6f6f6" stroke-width="2.2"/><path d="M1155 1017.5L1171 1014.5" stroke="#6a6a6a" stroke-width="2.2"/><path d="M1155 1021.5L1171 1018.5" stroke="#f6f6f6" stroke-width="2.2"/><path d="M1155 1043.5L1171 1040.5" stroke="#6a6a6a" stroke-width="2.2"/><path d="M1155 1047.5L1171 1044.5" stroke="#f6f6f6" stroke-width="2.2"/><rect x="1406" y="410" width="17" height="133" fill="#767676"/><path d="M1406 419.5L1423 416.5" stroke="#2e2e2e" stroke-width="2.2"/><path d="M1406 423.5L1423 420.5" stroke="#9c9c9c" stroke-width="2.2"/><path d="M1406 445.5L1423 442.5" stroke="#2e2e2e" stroke-width="2.2"/><path d="M1406 449.5L1423 446.5" stroke="#9c9c9c" stroke-width="2.2"/><path d="M1406 471.5L1423 468.5" stroke="#2e2e2e" stroke-width="2.2"/><path d="M1406 475.5L1423 472.5" stroke="#9c9c9c" stroke-width="2.2"/><path d="M1406 497.5L1423 494.5" stroke="#2e2e2e" stroke-width="2.2"/><path d="M1406 501.5L1423 498.5" stroke="#9c9c9c" stroke-width="2.2"/><path d="M1406 523.5L1423 520.5" stroke="#2e2e2e" stroke-width="2.2"/><path d="M1406 527.5L1423 524.5" stroke="#9c9c9c" stroke-width="2.2"/><rect x="1406" y="874" width="17" height="132" fill="#a9a9a9"/><path d="M1406 883.5L1423 880.5" stroke="#6a6a6a" stroke-width="2.2"/><path d="M1406 887.5L1423 884.5" stroke="#f6f6f6" stroke-width="2.2"/><path d="M1406 909.5L1423 906.5" stroke="#6a6a6a" stroke-width="2.2"/><path d="M1406 913.5L1423 910.5" stroke="#f6f6f6" stroke-width="2.2"/><path d="M1406 935.5L1423 932.5" stroke="#6a6a6a" stroke-width="2.2"/><path d="M1406 939.5L1423 936.5" stroke="#f6f6f6" stroke-width="2.2"/><path d="M1406 961.5L1423 958.5" stroke="#6a6a6a" stroke-width="2.2"/><path d="M1406 965.5L1423 962.5" stroke="#f6f6f6" stroke-width="2.2"/><path d="M1406 987.5L1423 984.5" stroke="#6a6a6a" stroke-width="2.2"/><path d="M1406 991.5L1423 988.5" stroke="#f6f6f6" stroke-width="2.2"/><rect x="1466" y="410" width="11" height="125" fill="#767676"/><path d="M1466 419.5L1477 416.5" stroke="#2e2e2e" stroke-width="2.2"/><path d="M1466 423.5L1477 420.5" stroke="#9c9c9c" stroke-width="2.2"/><path d="M1466 445.5L1477 442.5" stroke="#2e2e2e" stroke-width="2.2"/><path d="M1466 449.5L1477 446.5" stroke="#9c9c9c" stroke-width="2.2"/><path d="M1466 471.5L1477 468.5" stroke="#2e2e2e" stroke-width="2.2"/><path d="M1466 475.5L1477 472.5" stroke="#9c9c9c" stroke-width="2.2"/><path d="M1466 497.5L1477 494.5" stroke="#2e2e2e" stroke-width="2.2"/><path d="M1466 501.5L1477 498.5" stroke="#9c9c9c" stroke-width="2.2"/><path d="M1466 523.5L1477 520.5" stroke="#2e2e2e" stroke-width="2.2"/><path d="M1466 527.5L1477 524.5" stroke="#9c9c9c" stroke-width="2.2"/><rect x="1466" y="880" width="11" height="126" fill="#a9a9a9"/><path d="M1466 889.5L1477 886.5" stroke="#6a6a6a" stroke-width="2.2"/><path d="M1466 893.5L1477 890.5" stroke="#f6f6f6" stroke-width="2.2"/><path d="M1466 915.5L1477 912.5" stroke="#6a6a6a" stroke-width="2.2"/><path d="M1466 919.5L1477 916.5" stroke="#f6f6f6" stroke-width="2.2"/><path d="M1466 941.5L1477 938.5" stroke="#6a6a6a" stroke-width="2.2"/><path d="M1466 945.5L1477 942.5" stroke="#f6f6f6" stroke-width="2.2"/><path d="M1466 967.5L1477 964.5" stroke="#6a6a6a" stroke-width="2.2"/><path d="M1466 971.5L1477 968.5" stroke="#f6f6f6" stroke-width="2.2"/><path d="M1466 993.5L1477 990.5" stroke="#6a6a6a" stroke-width="2.2"/><path d="M1466 997.5L1477 994.5" stroke="#f6f6f6" stroke-width="2.2"/></g><polygon points="1090.0,564.4 1154.4,564.4 1154.4,619.0 1132.0,619.0 1132.0,682.0 1057.8,682.0 1057.8,661.0 1111.0,661.0 1111.0,585.6 1090.0,585.6" fill="#6d6d6d" />
<polygon points="1057.8,735.6 1132.0,735.6 1132.0,798.5 1154.4,798.5 1154.4,852.0 1090.0,852.0 1090.0,832.0 1111.0,832.0 1111.0,756.7 1057.8,756.7" fill="#c6c3c1" />
<path d="M1111 665V680M1111 738V754" stroke="#444" stroke-width="1"/><linearGradient id="gNotch" x1="0" y1="0" x2="0" y2="1"><stop offset="0" stop-color="#666462"/><stop offset=".5" stop-color="#8a8684"/><stop offset="1" stop-color="#b2aca8"/></linearGradient><polygon points="663.0,661.0 696.0,661.0 696.0,757.0 663.0,757.0" fill="url(#gNotch)" />
<rect x="663" y="662" width="5" height="94" fill="#8f8d8b"/><path d="M668.500 663V756" stroke="#333" stroke-width="1"/><polygon points="662.0,489.5 748.0,489.5 748.0,495.0 1005.6,495.0 1005.6,489.5 1090.0,489.5 1090.0,585.6 1111.0,585.6 1111.0,661.0 1057.8,661.0 1057.8,682.0 1343.0,682.0 1343.0,735.6 1057.8,735.6 1057.8,756.7 1111.0,756.7 1111.0,832.0 1090.0,832.0 1090.0,927.3 1005.6,927.3 1005.6,921.4 748.0,921.4 748.0,927.3 662.0,927.3 662.0,756.6 695.0,756.6 695.0,740.6 684.5,740.6 684.5,721.6 690.0,721.6 690.0,696.0 684.5,696.0 684.5,677.0 695.0,677.0 695.0,661.0 662.0,661.0" fill="#bac6c9" /><polygon points="662.0,489.5 748.0,489.5 748.0,495.0 1005.6,495.0 1005.6,489.5 1090.0,489.5 1090.0,585.6 1111.0,585.6 1111.0,661.0 1057.8,661.0 1057.8,682.0 1343.0,682.0 1343.0,735.6 1057.8,735.6 1057.8,756.7 1111.0,756.7 1111.0,832.0 1090.0,832.0 1090.0,927.3 1005.6,927.3 1005.6,921.4 748.0,921.4 748.0,927.3 662.0,927.3 662.0,756.6 695.0,756.6 695.0,740.6 684.5,740.6 684.5,721.6 690.0,721.6 690.0,696.0 684.5,696.0 684.5,677.0 695.0,677.0 695.0,661.0 662.0,661.0" fill="url(#hMotor)"/><polygon points="662.0,489.5 748.0,489.5 748.0,495.0 1005.6,495.0 1005.6,489.5 1090.0,489.5 1090.0,585.6 1111.0,585.6 1111.0,661.0 1057.8,661.0 1057.8,682.0 1343.0,682.0 1343.0,735.6 1057.8,735.6 1057.8,756.7 1111.0,756.7 1111.0,832.0 1090.0,832.0 1090.0,927.3 1005.6,927.3 1005.6,921.4 748.0,921.4 748.0,927.3 662.0,927.3 662.0,756.6 695.0,756.6 695.0,740.6 684.5,740.6 684.5,721.6 690.0,721.6 690.0,696.0 684.5,696.0 684.5,677.0 695.0,677.0 695.0,661.0 662.0,661.0" fill="none" stroke="#0d0d0d" stroke-width="2.0" stroke-linejoin="round"/>
<rect x="751" y="490.200" width="19.5" height="4" fill="#c9c9c9" stroke="#555" stroke-width=".8"/><rect x="751" y="922.300" width="19.5" height="4" fill="#c9c9c9" stroke="#555" stroke-width=".8"/><rect x="982.8" y="490.200" width="19.5" height="4" fill="#c9c9c9" stroke="#555" stroke-width=".8"/><rect x="982.8" y="922.300" width="19.5" height="4" fill="#c9c9c9" stroke="#555" stroke-width=".8"/><polygon points="1090.0,254.4 1670.0,254.4 1670.0,270.0 1585.5,270.0 1585.5,311.0 1670.0,311.0 1670.0,324.4 1613.0,324.4 1612.6,346.6 1584.0,330.8 1546.6,330.8 1507.0,357.7 1499.0,364.0 1491.7,367.4 1455.0,367.4 1446.0,364.0 1436.9,356.7 1398.3,330.5 1355.5,330.5 1335.5,346.7 1313.0,333.0 1282.0,333.0 1244.0,352.0 1209.0,330.5 1171.0,330.5 1154.4,342.0 1154.4,564.4 1090.0,564.4" fill="#bfc7ca" /><polygon points="1090.0,254.4 1670.0,254.4 1670.0,270.0 1585.5,270.0 1585.5,311.0 1670.0,311.0 1670.0,324.4 1613.0,324.4 1612.6,346.6 1584.0,330.8 1546.6,330.8 1507.0,357.7 1499.0,364.0 1491.7,367.4 1455.0,367.4 1446.0,364.0 1436.9,356.7 1398.3,330.5 1355.5,330.5 1335.5,346.7 1313.0,333.0 1282.0,333.0 1244.0,352.0 1209.0,330.5 1171.0,330.5 1154.4,342.0 1154.4,564.4 1090.0,564.4" fill="url(#hHous)"/><polygon points="1090.0,254.4 1670.0,254.4 1670.0,270.0 1585.5,270.0 1585.5,311.0 1670.0,311.0 1670.0,324.4 1613.0,324.4 1612.6,346.6 1584.0,330.8 1546.6,330.8 1507.0,357.7 1499.0,364.0 1491.7,367.4 1455.0,367.4 1446.0,364.0 1436.9,356.7 1398.3,330.5 1355.5,330.5 1335.5,346.7 1313.0,333.0 1282.0,333.0 1244.0,352.0 1209.0,330.5 1171.0,330.5 1154.4,342.0 1154.4,564.4 1090.0,564.4" fill="none" stroke="#0d0d0d" stroke-width="2.0" stroke-linejoin="round"/>
<polygon points="1090.0,852.0 1154.4,852.0 1154.4,1060.0 1158.0,1054.0 1162.0,1051.0 1213.0,1051.0 1264.4,1086.7 1304.4,1086.7 1342.0,1061.0 1350.0,1053.0 1358.0,1050.5 1400.0,1050.5 1453.0,1086.7 1493.0,1086.7 1540.0,1051.0 1589.0,1051.0 1613.0,1068.0 1613.0,1092.0 1670.0,1092.0 1670.0,1105.5 1585.5,1105.5 1585.5,1147.8 1670.0,1147.8 1670.0,1162.0 1090.0,1162.0" fill="#bfc7ca" /><polygon points="1090.0,852.0 1154.4,852.0 1154.4,1060.0 1158.0,1054.0 1162.0,1051.0 1213.0,1051.0 1264.4,1086.7 1304.4,1086.7 1342.0,1061.0 1350.0,1053.0 1358.0,1050.5 1400.0,1050.5 1453.0,1086.7 1493.0,1086.7 1540.0,1051.0 1589.0,1051.0 1613.0,1068.0 1613.0,1092.0 1670.0,1092.0 1670.0,1105.5 1585.5,1105.5 1585.5,1147.8 1670.0,1147.8 1670.0,1162.0 1090.0,1162.0" fill="url(#hHous)"/><polygon points="1090.0,852.0 1154.4,852.0 1154.4,1060.0 1158.0,1054.0 1162.0,1051.0 1213.0,1051.0 1264.4,1086.7 1304.4,1086.7 1342.0,1061.0 1350.0,1053.0 1358.0,1050.5 1400.0,1050.5 1453.0,1086.7 1493.0,1086.7 1540.0,1051.0 1589.0,1051.0 1613.0,1068.0 1613.0,1092.0 1670.0,1092.0 1670.0,1105.5 1585.5,1105.5 1585.5,1147.8 1670.0,1147.8 1670.0,1162.0 1090.0,1162.0" fill="none" stroke="#0d0d0d" stroke-width="2.0" stroke-linejoin="round"/>
<polygon points="1585.5,270.0 1671.0,270.0 1671.0,311.0 1585.5,311.0" fill="url(#gHole)" /><polygon points="1585.5,270.0 1671.0,270.0 1671.0,311.0 1585.5,311.0" fill="none" stroke="#0d0d0d" stroke-width="2.0" stroke-linejoin="round"/>
<polygon points="1585.5,1105.5 1671.0,1105.5 1671.0,1147.8 1585.5,1147.8" fill="url(#gHoleB)" /><polygon points="1585.5,1105.5 1671.0,1105.5 1671.0,1147.8 1585.5,1147.8" fill="none" stroke="#0d0d0d" stroke-width="2.0" stroke-linejoin="round"/>
<polygon points="1613.0,324.4 1671.0,324.4 1671.0,511.0 1659.0,511.0 1659.0,410.0 1613.0,410.0" fill="#6b6b6b" /><polygon points="1613.0,324.4 1671.0,324.4 1671.0,511.0 1659.0,511.0 1659.0,410.0 1613.0,410.0" fill="none" stroke="#0d0d0d" stroke-width="2.0" stroke-linejoin="round"/>
<polygon points="1613.0,1007.0 1659.0,1007.0 1659.0,905.5 1671.0,905.5 1671.0,1092.0 1613.0,1092.0" fill="url(#gLB)" /><polygon points="1613.0,1007.0 1659.0,1007.0 1659.0,905.5 1671.0,905.5 1671.0,1092.0 1613.0,1092.0" fill="none" stroke="#0d0d0d" stroke-width="2.0" stroke-linejoin="round"/>
<rect x="1660" y="906.500" width="10" height="100" fill="#dedede"/><polygon points="1671.0,254.4 1734.4,254.4 1734.4,272.0 1671.0,272.0" fill="#bfc7ca" /><polygon points="1671.0,254.4 1734.4,254.4 1734.4,272.0 1671.0,272.0" fill="url(#hCover)"/><polygon points="1671.0,254.4 1734.4,254.4 1734.4,272.0 1671.0,272.0" fill="none" stroke="#0d0d0d" stroke-width="2.0" stroke-linejoin="round"/>
<polygon points="1671.0,307.8 1734.0,307.8 1734.0,319.0 1769.0,319.0 1769.0,517.8 1754.4,517.8 1754.4,473.0 1744.4,473.0 1744.4,459.0 1671.0,459.0" fill="#bfc7ca" /><polygon points="1671.0,307.8 1734.0,307.8 1734.0,319.0 1769.0,319.0 1769.0,517.8 1754.4,517.8 1754.4,473.0 1744.4,473.0 1744.4,459.0 1671.0,459.0" fill="url(#hCover)"/><polygon points="1671.0,307.8 1734.0,307.8 1734.0,319.0 1769.0,319.0 1769.0,517.8 1754.4,517.8 1754.4,473.0 1744.4,473.0 1744.4,459.0 1671.0,459.0" fill="none" stroke="#0d0d0d" stroke-width="2.0" stroke-linejoin="round"/>
<polygon points="1671.0,959.0 1744.4,959.0 1744.4,945.0 1754.4,945.0 1754.4,901.0 1769.0,901.0 1769.0,1098.0 1734.0,1098.0 1734.0,1110.0 1671.0,1110.0" fill="#bfc7ca" /><polygon points="1671.0,959.0 1744.4,959.0 1744.4,945.0 1754.4,945.0 1754.4,901.0 1769.0,901.0 1769.0,1098.0 1734.0,1098.0 1734.0,1110.0 1671.0,1110.0" fill="url(#hCover)"/><polygon points="1671.0,959.0 1744.4,959.0 1744.4,945.0 1754.4,945.0 1754.4,901.0 1769.0,901.0 1769.0,1098.0 1734.0,1098.0 1734.0,1110.0 1671.0,1110.0" fill="none" stroke="#0d0d0d" stroke-width="2.0" stroke-linejoin="round"/>
<polygon points="1671.0,1144.5 1734.4,1144.5 1734.4,1161.5 1671.0,1161.5" fill="#bfc7ca" /><polygon points="1671.0,1144.5 1734.4,1144.5 1734.4,1161.5 1671.0,1161.5" fill="url(#hCover)"/><polygon points="1671.0,1144.5 1734.4,1144.5 1734.4,1161.5 1671.0,1161.5" fill="none" stroke="#0d0d0d" stroke-width="2.0" stroke-linejoin="round"/>
<path d="M1737 256.500H1769V262M1769 300V317M1737 1160.500H1769V1155" fill="none" stroke="#555" stroke-width="1"/><polygon points="1629.0,276.0 1631.0,274.4 1734.0,274.4 1734.0,261.0 1764.0,261.0 1766.7,264.0 1766.7,280.0 1753.0,280.0 1748.0,290.0 1753.0,300.0 1766.7,300.0 1766.7,315.0 1764.0,317.8 1734.0,317.8 1734.0,305.5 1631.0,305.5 1629.0,303.5" fill="#8e9aae" /><polygon points="1629.0,276.0 1631.0,274.4 1734.0,274.4 1734.0,261.0 1764.0,261.0 1766.7,264.0 1766.7,280.0 1753.0,280.0 1748.0,290.0 1753.0,300.0 1766.7,300.0 1766.7,315.0 1764.0,317.8 1734.0,317.8 1734.0,305.5 1631.0,305.5 1629.0,303.5" fill="url(#hScrew)"/><polygon points="1629.0,276.0 1631.0,274.4 1734.0,274.4 1734.0,261.0 1764.0,261.0 1766.7,264.0 1766.7,280.0 1753.0,280.0 1748.0,290.0 1753.0,300.0 1766.7,300.0 1766.7,315.0 1764.0,317.8 1734.0,317.8 1734.0,305.5 1631.0,305.5 1629.0,303.5" fill="none" stroke="#0d0d0d" stroke-width="2.0" stroke-linejoin="round"/>
<rect x="1753.500" y="281" width="13" height="18" fill="#b9c3d6"/><rect x="1761" y="281" width="6" height="18" fill="#8d93a0"/><path d="M1753 280l-5 10 5 10" fill="none" stroke="#111" stroke-width="1.500"/><polygon points="1629.0,1113.5 1631.0,1112.0 1734.0,1112.0 1734.0,1097.8 1764.0,1097.8 1766.7,1100.5 1766.7,1117.0 1753.0,1117.0 1748.0,1127.0 1753.0,1137.0 1766.7,1137.0 1766.7,1153.0 1764.0,1155.5 1734.0,1155.5 1734.0,1143.0 1631.0,1143.0 1629.0,1141.5" fill="#8e9aae" /><polygon points="1629.0,1113.5 1631.0,1112.0 1734.0,1112.0 1734.0,1097.8 1764.0,1097.8 1766.7,1100.5 1766.7,1117.0 1753.0,1117.0 1748.0,1127.0 1753.0,1137.0 1766.7,1137.0 1766.7,1153.0 1764.0,1155.5 1734.0,1155.5 1734.0,1143.0 1631.0,1143.0 1629.0,1141.5" fill="url(#hCover)"/><polygon points="1629.0,1113.5 1631.0,1112.0 1734.0,1112.0 1734.0,1097.8 1764.0,1097.8 1766.7,1100.5 1766.7,1117.0 1753.0,1117.0 1748.0,1127.0 1753.0,1137.0 1766.7,1137.0 1766.7,1153.0 1764.0,1155.5 1734.0,1155.5 1734.0,1143.0 1631.0,1143.0 1629.0,1141.5" fill="none" stroke="#0d0d0d" stroke-width="2.0" stroke-linejoin="round"/>
<rect x="1753.500" y="1118" width="13" height="18" fill="#9aa0ae"/><rect x="1761" y="1118" width="6" height="18" fill="#7c828e"/><path d="M1753 1117l-5 10 5 10" fill="none" stroke="#111" stroke-width="1.500"/><polygon points="1672.0,459.0 1742.0,459.0 1744.4,462.0 1744.4,518.0 1742.0,521.0 1672.0,521.0 1670.0,518.0 1670.0,462.0" fill="#74778d" /><polygon points="1672.0,459.0 1742.0,459.0 1744.4,462.0 1744.4,518.0 1742.0,521.0 1672.0,521.0 1670.0,518.0 1670.0,462.0" fill="url(#hBear)"/><polygon points="1672.0,459.0 1742.0,459.0 1744.4,462.0 1744.4,518.0 1742.0,521.0 1672.0,521.0 1670.0,518.0 1670.0,462.0" fill="none" stroke="#0d0d0d" stroke-width="2.0" stroke-linejoin="round"/>
<polygon points="1744.4,473.0 1754.4,473.0 1754.4,521.0 1744.4,521.0" fill="#6f6f6f" /><polygon points="1744.4,473.0 1754.4,473.0 1754.4,521.0 1744.4,521.0" fill="none" stroke="#0d0d0d" stroke-width="2.0" stroke-linejoin="round"/>
<polygon points="1671.0,895.5 1741.0,895.5 1743.5,898.5 1743.5,956.0 1741.0,959.0 1671.0,959.0 1669.0,956.0 1669.0,898.5" fill="#74778d" /><polygon points="1671.0,895.5 1741.0,895.5 1743.5,898.5 1743.5,956.0 1741.0,959.0 1671.0,959.0 1669.0,956.0 1669.0,898.5" fill="url(#hBear)"/><polygon points="1671.0,895.5 1741.0,895.5 1743.5,898.5 1743.5,956.0 1741.0,959.0 1671.0,959.0 1669.0,956.0 1669.0,898.5" fill="none" stroke="#0d0d0d" stroke-width="2.0" stroke-linejoin="round"/>
<polygon points="1743.5,895.5 1753.5,895.5 1753.5,945.0 1743.5,945.0" fill="#cfcfcf" />
<polygon points="1743.5,912.0 1752.0,912.0 1752.0,943.0 1743.5,943.0" fill="#d6d6d6" /><polygon points="1743.5,912.0 1752.0,912.0 1752.0,943.0 1743.5,943.0" fill="none" stroke="#0d0d0d" stroke-width="1.5" stroke-linejoin="round"/>
<polygon points="1610.0,410.0 1659.0,410.0 1659.0,511.0 1670.0,511.0 1670.0,521.0 1812.0,521.0 1812.0,895.5 1670.0,895.5 1670.0,905.5 1659.0,905.5 1659.0,1006.7 1610.0,1006.7 1610.0,835.5 1661.0,835.5 1661.0,821.0 1667.0,821.0 1667.0,597.0 1661.0,597.0 1661.0,581.0 1610.0,581.0" fill="#5289c7" /><polygon points="1610.0,410.0 1659.0,410.0 1659.0,511.0 1670.0,511.0 1670.0,521.0 1812.0,521.0 1812.0,895.5 1670.0,895.5 1670.0,905.5 1659.0,905.5 1659.0,1006.7 1610.0,1006.7 1610.0,835.5 1661.0,835.5 1661.0,821.0 1667.0,821.0 1667.0,597.0 1661.0,597.0 1661.0,581.0 1610.0,581.0" fill="url(#hBlue)"/><polygon points="1610.0,410.0 1659.0,410.0 1659.0,511.0 1670.0,511.0 1670.0,521.0 1812.0,521.0 1812.0,895.5 1670.0,895.5 1670.0,905.5 1659.0,905.5 1659.0,1006.7 1610.0,1006.7 1610.0,835.5 1661.0,835.5 1661.0,821.0 1667.0,821.0 1667.0,597.0 1661.0,597.0 1661.0,581.0 1610.0,581.0" fill="none" stroke="#0d0d0d" stroke-width="2.0" stroke-linejoin="round"/>
<polygon points="1661.0,597.0 1667.0,597.0 1667.0,821.0 1661.0,821.0" fill="#355f93" /><polygon points="1661.0,597.0 1667.0,597.0 1667.0,821.0 1661.0,821.0" fill="none" stroke="#0d0d0d" stroke-width="1.2" stroke-linejoin="round"/>
<polygon points="1612.0,581.0 1659.0,581.0 1661.0,583.0 1661.0,625.0 1659.0,627.0 1612.0,627.0 1610.0,625.0 1610.0,583.0" fill="#c2c9c3" /><polygon points="1612.0,581.0 1659.0,581.0 1661.0,583.0 1661.0,625.0 1659.0,627.0 1612.0,627.0 1610.0,625.0 1610.0,583.0" fill="url(#hB4)"/><polygon points="1612.0,581.0 1659.0,581.0 1661.0,583.0 1661.0,625.0 1659.0,627.0 1612.0,627.0 1610.0,625.0 1610.0,583.0" fill="none" stroke="#0d0d0d" stroke-width="2.0" stroke-linejoin="round"/>
<polygon points="1612.0,789.0 1659.0,789.0 1661.0,791.0 1661.0,833.5 1659.0,835.5 1612.0,835.5 1610.0,833.5 1610.0,791.0" fill="#c2c9c3" /><polygon points="1612.0,789.0 1659.0,789.0 1661.0,791.0 1661.0,833.5 1659.0,835.5 1612.0,835.5 1610.0,833.5 1610.0,791.0" fill="url(#hB4)"/><polygon points="1612.0,789.0 1659.0,789.0 1661.0,791.0 1661.0,833.5 1659.0,835.5 1612.0,835.5 1610.0,833.5 1610.0,791.0" fill="none" stroke="#0d0d0d" stroke-width="2.0" stroke-linejoin="round"/>
<clipPath id="cH1"><rect x="1477.500" y="371" width="120" height="236"/></clipPath><clipPath id="cH2"><rect x="1477.500" y="820" width="120" height="221"/></clipPath><linearGradient id="gG1" x1="0" y1="0" x2="0" y2="1"><stop offset="0" stop-color="#8798a5"/><stop offset=".5" stop-color="#7e909d"/><stop offset="1" stop-color="#9fb2bf"/></linearGradient><g clip-path="url(#cH1)"><rect x="1477" y="370" width="121" height="240" fill="url(#gG1)"/><polygon points="1477.5,372.5 1596.7,372.5 1596.7,385.0 1477.5,375.8" fill="#93a5b2"/><polygon points="1551.7,375.8 1596.7,383.3 1596.7,386.7 1551.7,378.3" fill="#b9cfdd"/><polygon points="1478.3,397.5 1550.0,416.7 1546.7,418.7 1478.3,405.3" fill="#c5dbe9" stroke="#3a4a55" stroke-width="1" stroke-linejoin="round"/><polygon points="1550.0,418.7 1593.3,422.0 1597.0,425.0 1597.0,442.5 1593.3,441.3" fill="#c3daea" stroke="#0d0d0d" stroke-width="1.8" stroke-linejoin="round"/><polygon points="1478.3,430.0 1596.7,453.3 1596.7,460.0 1478.3,435.8" fill="#9db1bf"/><polygon points="1478.3,441.7 1480.8,440.8 1596.7,470.0 1596.7,495.8 1593.3,495.8 1478.3,465.8" fill="#c1d9e9" stroke="#0d0d0d" stroke-width="1.8" stroke-linejoin="round"/><polygon points="1478.3,469.2 1596.7,499.2 1596.7,504.2 1478.3,475.0" fill="#8a9caa"/><polygon points="1478.3,477.5 1596.7,507.5 1596.7,512.5 1478.3,481.7" fill="#e4eef5"/><polygon points="1478.3,488.3 1596.7,516.7 1596.7,542.5 1478.3,514.2" fill="#c1d9e9" stroke="#0d0d0d" stroke-width="1.8" stroke-linejoin="round"/><polygon points="1478.3,516.7 1596.7,545.0 1596.7,550.0 1478.3,522.5" fill="#8a9caa"/><polygon points="1478.3,526.7 1596.7,551.7 1596.7,557.5 1478.3,532.5" fill="#f2f7fa"/><polygon points="1560.0,560.0 1596.7,560.0 1596.7,583.3 1576.7,581.7" fill="#eef4f8"/><polygon points="1478.3,538.3 1493.3,540.8 1560.0,574.2 1515.0,572.5 1478.3,561.7" fill="#c1d9e9" stroke="#0d0d0d" stroke-width="1.8" stroke-linejoin="round"/><polygon points="1478.3,564.2 1515.0,573.3 1485.0,593.3 1478.3,606.7 1478.3,593.3" fill="#eef4f8"/><polygon points="1576.7,581.7 1596.7,583.3 1596.7,606.7 1590.0,593.3" fill="#eef4f8"/><path d="M1488.3 443.3L1501.7 470.8" stroke="#2c3f4a" stroke-width="1"/><path d="M1510.0 450.0L1531.7 478.3" stroke="#2c3f4a" stroke-width="1"/><path d="M1550.0 460.0L1571.7 488.3" stroke="#2c3f4a" stroke-width="1"/><path d="M1481.7 491.7L1498.3 518.3" stroke="#2c3f4a" stroke-width="1"/><path d="M1520.0 500.8L1541.7 528.3" stroke="#2c3f4a" stroke-width="1"/><path d="M1560.0 510.8L1580.0 536.7" stroke="#2c3f4a" stroke-width="1"/><path d="M1493.3 541.7L1508.3 570.0" stroke="#2c3f4a" stroke-width="1"/></g><rect x="1477.500" y="371.500" width="119.500" height="234" fill="none" stroke="#2a2a2a" stroke-width="1.200"/><linearGradient id="gG2" x1="0" y1="0" x2="0" y2="1"><stop offset="0" stop-color="#7f909c"/><stop offset=".6" stop-color="#8b9ca8"/><stop offset="1" stop-color="#a9bbc7"/></linearGradient><g clip-path="url(#cH2)"><rect x="1477" y="820" width="121" height="222" fill="url(#gG2)"/><polygon points="1477.5,850.8 1596.7,875.0 1596.7,878.7 1477.5,855.3" fill="#cfdfe8"/><polygon points="1477.5,857.5 1596.7,880.8 1596.7,883.3 1477.5,860.0" fill="#e8f0f5"/><polygon points="1481.7,867.2 1510.0,865.3 1597.5,888.0 1597.5,902.5 1594.2,905.3" fill="#b4c8f0" stroke="#0d0d0d" stroke-width="1.8" stroke-linejoin="round"/><polygon points="1477.5,893.3 1596.7,918.3 1596.7,923.3 1477.5,898.3" fill="#a9bcc9"/><polygon points="1477.5,901.7 1596.7,926.7 1596.7,930.0 1477.5,904.2" fill="#dfe9f0"/><polygon points="1479.2,909.2 1482.5,908.3 1596.7,944.2 1596.7,946.7 1593.3,955.8 1479.2,926.7" fill="#b4c8f0" stroke="#0d0d0d" stroke-width="1.8" stroke-linejoin="round"/><polygon points="1477.5,930.8 1596.7,960.0 1596.7,965.0 1477.5,936.7" fill="#a3b6c3"/><polygon points="1477.5,942.5 1596.7,965.0 1596.7,970.0 1477.5,951.7" fill="#d5e2ea"/><polygon points="1478.3,953.3 1596.7,970.8 1596.7,995.0 1593.3,996.7 1481.7,968.3 1478.3,965.0" fill="#fbfdfe" stroke="#51626e" stroke-width="1" stroke-linejoin="round"/><polygon points="1481.7,968.3 1593.3,996.7 1593.3,1003.3 1481.7,976.7" fill="#8395a2" stroke="#33424c" stroke-width="1" stroke-linejoin="round"/><polygon points="1478.3,978.3 1596.7,1003.3 1596.7,1031.7 1593.3,1033.3 1481.7,1015.0 1478.3,1011.7" fill="#f4f9fc" stroke="#51626e" stroke-width="1" stroke-linejoin="round"/><polygon points="1481.7,1015.0 1593.3,1033.3 1593.3,1036.7 1481.7,1020.0" fill="#8a9ca9" stroke="#33424c" stroke-width="1" stroke-linejoin="round"/><polygon points="1477.5,1022.5 1596.7,1039.2 1596.7,1041.7 1477.5,1041.7" fill="#a7b9c5"/><path d="M1513.3 875.0L1530.0 868.3" stroke="#5a6f9c" stroke-width="1"/><path d="M1553.3 890.0L1570.0 882.5" stroke="#5a6f9c" stroke-width="1"/><path d="M1508.3 930.8L1526.7 922.5" stroke="#5a6f9c" stroke-width="1"/><path d="M1550.0 944.2L1568.3 936.7" stroke="#5a6f9c" stroke-width="1"/></g><path d="M1477.500 838V1037l3 3h113.500l3-3V838" fill="none" stroke="#2a2a2a" stroke-width="1.200"/><polygon points="1422.5,535.0 1465.8,535.0 1465.8,575.8 1449.2,575.8 1449.2,545.0 1422.5,545.0" fill="#2c5688" /><polygon points="1422.5,535.0 1465.8,535.0 1465.8,575.8 1449.2,575.8 1449.2,545.0 1422.5,545.0" fill="none" stroke="#0d0d0d" stroke-width="1.2" stroke-linejoin="round"/>
<polygon points="1422.5,882.0 1465.8,882.0 1465.8,841.2 1449.2,841.2 1449.2,872.0 1422.5,872.0" fill="#2c5688" /><polygon points="1422.5,882.0 1465.8,882.0 1465.8,841.2 1449.2,841.2 1449.2,872.0 1422.5,872.0" fill="none" stroke="#0d0d0d" stroke-width="1.2" stroke-linejoin="round"/>
<polygon points="1465.8,570.0 1477.5,570.0 1477.5,576.7 1465.8,576.7" fill="#4a80bd" /><polygon points="1465.8,570.0 1477.5,570.0 1477.5,576.7 1465.8,576.7" fill="none" stroke="#0d0d0d" stroke-width="1" stroke-linejoin="round"/>
<polygon points="1465.8,838.0 1477.5,838.0 1477.5,845.0 1465.8,845.0" fill="#4a80bd" /><polygon points="1465.8,838.0 1477.5,838.0 1477.5,845.0 1465.8,845.0" fill="none" stroke="#0d0d0d" stroke-width="1" stroke-linejoin="round"/>
<linearGradient id="gStrip" x1="0" y1="0" x2="0" y2="1"><stop offset="0" stop-color="#4c7fbd"/><stop offset=".5" stop-color="#2f5d96"/><stop offset="1" stop-color="#4c7fbd"/></linearGradient><rect x="1467.5" y="446.7" width="6.5" height="98.30000000000001" rx="2" fill="url(#gStrip)" stroke="#1d3450" stroke-width="1"/><rect x="1600.8" y="446.7" width="5.900000000000091" height="99.09999999999997" rx="2" fill="url(#gStrip)" stroke="#1d3450" stroke-width="1"/><rect x="1467.5" y="862.5" width="6.5" height="99.20000000000005" rx="2" fill="url(#gStrip)" stroke="#1d3450" stroke-width="1"/><rect x="1600.8" y="862.5" width="5.900000000000091" height="99.20000000000005" rx="2" fill="url(#gStrip)" stroke="#1d3450" stroke-width="1"/><polygon points="1423.0,410.0 1465.5,410.0 1465.5,535.0 1423.0,535.0" fill="#5289c7" /><polygon points="1423.0,410.0 1465.5,410.0 1465.5,535.0 1423.0,535.0" fill="url(#hBlue)"/><polygon points="1423.0,410.0 1465.5,410.0 1465.5,535.0 1423.0,535.0" fill="none" stroke="#0d0d0d" stroke-width="2.0" stroke-linejoin="round"/>
<polygon points="1423.0,882.0 1465.5,882.0 1465.5,1006.7 1423.0,1006.7" fill="#5289c7" /><polygon points="1423.0,882.0 1465.5,882.0 1465.5,1006.7 1423.0,1006.7" fill="url(#hBlue)"/><polygon points="1423.0,882.0 1465.5,882.0 1465.5,1006.7 1423.0,1006.7" fill="none" stroke="#0d0d0d" stroke-width="2.0" stroke-linejoin="round"/>
<polygon points="1595.5,802.0 1608.5,802.0 1608.5,826.7 1595.5,826.7" fill="#2d5a8c" /><polygon points="1595.5,802.0 1608.5,802.0 1608.5,826.7 1595.5,826.7" fill="none" stroke="#0d0d0d" stroke-width="1.5" stroke-linejoin="round"/>
<polygon points="1597.5,570.0 1608.5,570.0 1608.5,614.0 1597.5,614.0" fill="#4a80bd" /><polygon points="1597.5,570.0 1608.5,570.0 1608.5,614.0 1597.5,614.0" fill="none" stroke="#0d0d0d" stroke-width="1.5" stroke-linejoin="round"/>
<polygon points="1171.0,439.0 1405.6,439.0 1405.6,498.8 1171.0,498.8" fill="#bfc7ca" /><polygon points="1171.0,439.0 1405.6,439.0 1405.6,498.8 1171.0,498.8" fill="url(#hPin)"/><polygon points="1171.0,439.0 1405.6,439.0 1405.6,498.8 1171.0,498.8" fill="none" stroke="#0d0d0d" stroke-width="2.0" stroke-linejoin="round"/>
<polygon points="1225.5,399.0 1225.5,366.0 1237.0,363.0 1244.0,352.0 1255.0,360.0 1269.0,367.0 1306.7,367.8 1325.0,361.0 1335.5,346.7 1344.4,356.0 1344.4,399.0 1293.0,399.0 1293.0,415.5 1279.0,415.5 1279.0,399.0" fill="#b4dcf1" /><polygon points="1225.5,399.0 1225.5,366.0 1237.0,363.0 1244.0,352.0 1255.0,360.0 1269.0,367.0 1306.7,367.8 1325.0,361.0 1335.5,346.7 1344.4,356.0 1344.4,399.0 1293.0,399.0 1293.0,415.5 1279.0,415.5 1279.0,399.0" fill="url(#hPlanet)"/><polygon points="1225.5,399.0 1225.5,366.0 1237.0,363.0 1244.0,352.0 1255.0,360.0 1269.0,367.0 1306.7,367.8 1325.0,361.0 1335.5,346.7 1344.4,356.0 1344.4,399.0 1293.0,399.0 1293.0,415.5 1279.0,415.5 1279.0,399.0" fill="none" stroke="#0d0d0d" stroke-width="2.0" stroke-linejoin="round"/>
<polygon points="1225.5,353.0 1240.0,353.0 1237.0,363.0 1225.5,366.0" fill="#9cc0d6" /><polygon points="1225.5,353.0 1240.0,353.0 1237.0,363.0 1225.5,366.0" fill="none" stroke="#0d0d0d" stroke-width="1" stroke-linejoin="round"/>
<polygon points="1279.0,415.5 1293.0,415.5 1293.0,438.5 1279.0,438.5" fill="#5f7d8e" />
<polygon points="1228.5,399.0 1277.0,399.0 1279.0,401.0 1279.0,436.0 1277.0,438.5 1228.5,438.5 1227.0,436.0 1227.0,401.0" fill="#c7c7c1" /><polygon points="1228.5,399.0 1277.0,399.0 1279.0,401.0 1279.0,436.0 1277.0,438.5 1228.5,438.5 1227.0,436.0 1227.0,401.0" fill="url(#hB2)"/><polygon points="1228.5,399.0 1277.0,399.0 1279.0,401.0 1279.0,436.0 1277.0,438.5 1228.5,438.5 1227.0,436.0 1227.0,401.0" fill="none" stroke="#0d0d0d" stroke-width="2.0" stroke-linejoin="round"/>
<polygon points="1295.0,399.0 1343.0,399.0 1344.4,401.0 1344.4,436.0 1343.0,438.5 1295.0,438.5 1293.0,436.0 1293.0,401.0" fill="#c4cacb" /><polygon points="1295.0,399.0 1343.0,399.0 1344.4,401.0 1344.4,436.0 1343.0,438.5 1295.0,438.5 1293.0,436.0 1293.0,401.0" fill="url(#hB1)"/><polygon points="1295.0,399.0 1343.0,399.0 1344.4,401.0 1344.4,436.0 1343.0,438.5 1295.0,438.5 1293.0,436.0 1293.0,401.0" fill="none" stroke="#0d0d0d" stroke-width="2.0" stroke-linejoin="round"/>
<path d="M1244 352Q1262 340 1282 333H1313Q1326 339 1335.500 346.700Q1326 358 1312 366Q1290 370 1266 367Q1254 361 1244 352Z" fill="#cb0000" stroke="#0d0d0d" stroke-width="2" stroke-linejoin="round"/><polygon points="1278.8,498.8 1293.0,498.8 1293.0,521.0 1278.8,521.0" fill="#a9cfe0" />
<polygon points="1289.4,604.8 1320.0,587.6 1332.0,575.6 1345.0,570.0 1345.0,580.0 1326.6,590.0 1320.0,595.5 1316.0,606.0" fill="#8ea9bd" /><polygon points="1289.4,604.8 1320.0,587.6 1332.0,575.6 1345.0,570.0 1345.0,580.0 1326.6,590.0 1320.0,595.5 1316.0,606.0" fill="none" stroke="#0d0d0d" stroke-width="1" stroke-linejoin="round"/>
<polygon points="1226.0,537.8 1278.8,537.8 1278.8,521.0 1293.0,521.0 1293.0,537.8 1345.0,537.8 1345.0,570.0 1332.0,575.6 1320.0,587.6 1289.4,604.8 1253.6,604.8 1235.0,595.5 1226.0,585.0" fill="#b4dcf1" /><polygon points="1226.0,537.8 1278.8,537.8 1278.8,521.0 1293.0,521.0 1293.0,537.8 1345.0,537.8 1345.0,570.0 1332.0,575.6 1320.0,587.6 1289.4,604.8 1253.6,604.8 1235.0,595.5 1226.0,585.0" fill="url(#hPlanet)"/><polygon points="1226.0,537.8 1278.8,537.8 1278.8,521.0 1293.0,521.0 1293.0,537.8 1345.0,537.8 1345.0,570.0 1332.0,575.6 1320.0,587.6 1289.4,604.8 1253.6,604.8 1235.0,595.5 1226.0,585.0" fill="none" stroke="#0d0d0d" stroke-width="2.0" stroke-linejoin="round"/>
<polygon points="1228.5,498.8 1277.0,498.8 1278.8,501.0 1278.8,535.5 1277.0,537.8 1228.5,537.8 1227.0,535.5 1227.0,501.0" fill="#c7c7c1" /><polygon points="1228.5,498.8 1277.0,498.8 1278.8,501.0 1278.8,535.5 1277.0,537.8 1228.5,537.8 1227.0,535.5 1227.0,501.0" fill="url(#hB2)"/><polygon points="1228.5,498.8 1277.0,498.8 1278.8,501.0 1278.8,535.5 1277.0,537.8 1228.5,537.8 1227.0,535.5 1227.0,501.0" fill="none" stroke="#0d0d0d" stroke-width="2.0" stroke-linejoin="round"/>
<polygon points="1295.0,498.8 1343.0,498.8 1344.6,501.0 1344.6,535.5 1343.0,537.8 1295.0,537.8 1293.0,535.5 1293.0,501.0" fill="#c4cacb" /><polygon points="1295.0,498.8 1343.0,498.8 1344.6,501.0 1344.6,535.5 1343.0,537.8 1295.0,537.8 1293.0,535.5 1293.0,501.0" fill="url(#hB1)"/><polygon points="1295.0,498.8 1343.0,498.8 1344.6,501.0 1344.6,535.5 1343.0,537.8 1295.0,537.8 1293.0,535.5 1293.0,501.0" fill="none" stroke="#0d0d0d" stroke-width="2.0" stroke-linejoin="round"/>
<polygon points="1171.0,410.0 1213.0,410.0 1213.0,418.0 1222.0,418.0 1222.0,432.0 1217.0,438.5 1171.0,438.5" fill="#f09116" /><polygon points="1171.0,410.0 1213.0,410.0 1213.0,418.0 1222.0,418.0 1222.0,432.0 1217.0,438.5 1171.0,438.5" fill="url(#hOr)"/><polygon points="1171.0,410.0 1213.0,410.0 1213.0,418.0 1222.0,418.0 1222.0,432.0 1217.0,438.5 1171.0,438.5" fill="none" stroke="#0d0d0d" stroke-width="2.0" stroke-linejoin="round"/>
<polygon points="1357.8,410.0 1405.6,410.0 1405.6,438.5 1354.0,438.5 1349.0,432.0 1349.0,418.0 1357.8,418.0" fill="#f09116" /><polygon points="1357.8,410.0 1405.6,410.0 1405.6,438.5 1354.0,438.5 1349.0,432.0 1349.0,418.0 1357.8,418.0" fill="url(#hOr)"/><polygon points="1357.8,410.0 1405.6,410.0 1405.6,438.5 1354.0,438.5 1349.0,432.0 1349.0,418.0 1357.8,418.0" fill="none" stroke="#0d0d0d" stroke-width="2.0" stroke-linejoin="round"/>
<polygon points="1171.0,498.8 1223.7,498.8 1223.7,517.8 1213.7,517.8 1213.7,534.4 1171.0,534.4" fill="#f09116" /><polygon points="1171.0,498.8 1223.7,498.8 1223.7,517.8 1213.7,517.8 1213.7,534.4 1171.0,534.4" fill="url(#hOr)"/><polygon points="1171.0,498.8 1223.7,498.8 1223.7,517.8 1213.7,517.8 1213.7,534.4 1171.0,534.4" fill="none" stroke="#0d0d0d" stroke-width="2.0" stroke-linejoin="round"/>
<polygon points="1171.0,534.4 1213.7,534.4 1213.7,575.0 1215.0,581.0 1208.4,599.5 1196.5,616.8 1171.0,616.8" fill="url(#gBrown)" /><polygon points="1171.0,534.4 1213.7,534.4 1213.7,575.0 1215.0,581.0 1208.4,599.5 1196.5,616.8 1171.0,616.8" fill="none" stroke="#0d0d0d" stroke-width="1.5" stroke-linejoin="round"/>
<polygon points="1213.7,517.8 1225.6,517.8 1225.6,578.0 1216.0,583.0 1213.7,575.0" fill="#e8850e" /><polygon points="1213.7,517.8 1225.6,517.8 1225.6,578.0 1216.0,583.0 1213.7,575.0" fill="none" stroke="#0d0d0d" stroke-width="1.5" stroke-linejoin="round"/>
<polygon points="1346.5,498.8 1356.5,498.8 1356.5,615.5 1346.5,615.5" fill="url(#gThin)" /><polygon points="1346.5,498.8 1356.5,498.8 1356.5,615.5 1346.5,615.5" fill="none" stroke="#0d0d0d" stroke-width="1.5" stroke-linejoin="round"/>
<polygon points="1356.5,498.8 1405.6,498.8 1405.6,543.0 1449.2,543.0 1449.2,575.8 1466.7,575.8 1466.7,607.0 1476.0,607.0 1481.0,600.0 1478.3,595.0 1484.0,588.0 1494.0,580.0 1505.0,575.5 1515.0,573.3 1556.7,573.3 1568.0,578.0 1578.0,587.0 1585.0,596.7 1588.3,604.2 1596.7,605.8 1596.7,613.3 1610.0,613.3 1610.0,627.0 1661.0,627.0 1661.0,789.0 1610.0,789.0 1610.0,802.0 1595.5,802.0 1595.5,836.0 1578.8,827.0 1575.0,822.5 1575.0,816.0 1570.0,812.0 1555.6,808.4 1495.5,809.0 1491.0,818.0 1480.0,831.7 1450.8,842.3 1450.8,873.5 1405.6,873.5 1405.6,1006.7 1171.0,1006.7 1171.0,881.5 1357.8,881.5 1357.8,836.4 1409.6,836.4 1409.6,826.7 1414.4,826.7 1414.4,596.7 1409.6,596.7 1409.6,581.0 1356.5,581.0" fill="#f09116" /><polygon points="1356.5,498.8 1405.6,498.8 1405.6,543.0 1449.2,543.0 1449.2,575.8 1466.7,575.8 1466.7,607.0 1476.0,607.0 1481.0,600.0 1478.3,595.0 1484.0,588.0 1494.0,580.0 1505.0,575.5 1515.0,573.3 1556.7,573.3 1568.0,578.0 1578.0,587.0 1585.0,596.7 1588.3,604.2 1596.7,605.8 1596.7,613.3 1610.0,613.3 1610.0,627.0 1661.0,627.0 1661.0,789.0 1610.0,789.0 1610.0,802.0 1595.5,802.0 1595.5,836.0 1578.8,827.0 1575.0,822.5 1575.0,816.0 1570.0,812.0 1555.6,808.4 1495.5,809.0 1491.0,818.0 1480.0,831.7 1450.8,842.3 1450.8,873.5 1405.6,873.5 1405.6,1006.7 1171.0,1006.7 1171.0,881.5 1357.8,881.5 1357.8,836.4 1409.6,836.4 1409.6,826.7 1414.4,826.7 1414.4,596.7 1409.6,596.7 1409.6,581.0 1356.5,581.0" fill="url(#hOr)"/><polygon points="1356.5,498.8 1405.6,498.8 1405.6,543.0 1449.2,543.0 1449.2,575.8 1466.7,575.8 1466.7,607.0 1476.0,607.0 1481.0,600.0 1478.3,595.0 1484.0,588.0 1494.0,580.0 1505.0,575.5 1515.0,573.3 1556.7,573.3 1568.0,578.0 1578.0,587.0 1585.0,596.7 1588.3,604.2 1596.7,605.8 1596.7,613.3 1610.0,613.3 1610.0,627.0 1661.0,627.0 1661.0,789.0 1610.0,789.0 1610.0,802.0 1595.5,802.0 1595.5,836.0 1578.8,827.0 1575.0,822.5 1575.0,816.0 1570.0,812.0 1555.6,808.4 1495.5,809.0 1491.0,818.0 1480.0,831.7 1450.8,842.3 1450.8,873.5 1405.6,873.5 1405.6,1006.7 1171.0,1006.7 1171.0,881.5 1357.8,881.5 1357.8,836.4 1409.6,836.4 1409.6,826.7 1414.4,826.7 1414.4,596.7 1409.6,596.7 1409.6,581.0 1356.5,581.0" fill="none" stroke="#0d0d0d" stroke-width="2.0" stroke-linejoin="round"/>
<polygon points="1409.6,597.0 1414.4,597.0 1414.4,826.5 1409.6,826.5" fill="#c47410" /><polygon points="1409.6,597.0 1414.4,597.0 1414.4,826.5 1409.6,826.5" fill="none" stroke="#0d0d0d" stroke-width="1" stroke-linejoin="round"/>
<linearGradient id="gYel" x1="0" y1="0" x2="0" y2="1"><stop offset="0" stop-color="#f6a62a"/><stop offset=".55" stop-color="#ffd56a"/><stop offset="1" stop-color="#fff3b8"/></linearGradient><polygon points="1468.0,577.0 1477.5,577.0 1477.5,596.0 1480.0,600.0 1476.0,605.5 1468.0,605.5" fill="url(#gYel)" />
<polygon points="1565.0,577.0 1597.0,581.0 1597.0,604.5 1589.0,603.0 1585.0,596.7 1578.0,587.0" fill="url(#gYel)" />
<path d="M1466.700 576V607H1476L1481 600L1478.300 595Q1494 577 1515 573.300H1556.700Q1574 580 1585 596.700L1588.300 604.200L1596.700 605.800" fill="none" stroke="#0d0d0d" stroke-width="2"/><polygon points="1480.0,831.7 1491.0,818.0 1495.5,809.0 1555.6,808.4 1570.0,812.0 1575.0,816.0 1575.0,822.5 1578.8,827.0 1595.0,836.0 1597.0,838.0 1477.5,838.0" fill="url(#gOrD)" /><polygon points="1480.0,831.7 1491.0,818.0 1495.5,809.0 1555.6,808.4 1570.0,812.0 1575.0,816.0 1575.0,822.5 1578.8,827.0 1595.0,836.0 1597.0,838.0 1477.5,838.0" fill="none" stroke="#0d0d0d" stroke-width="1.5" stroke-linejoin="round"/>
<polygon points="1343.0,682.0 1411.0,682.0 1411.0,735.6 1343.0,735.6" fill="url(#gBore)" />
<polygon points="1207.7,811.8 1225.0,815.8 1259.5,843.7 1292.7,843.7 1328.6,822.4 1328.6,812.0 1344.5,808.0 1346.5,808.0 1346.5,846.0 1213.7,846.0 1213.7,839.7" fill="#7d620c" />
<polygon points="1132.0,619.0 1197.8,619.0 1216.4,582.3 1225.7,586.0 1235.0,598.0 1243.0,606.0 1316.0,606.0 1320.0,595.5 1326.6,590.0 1343.9,578.0 1346.5,578.0 1346.5,615.5 1357.8,615.5 1357.8,627.4 1409.6,627.4 1409.6,682.0 1179.0,682.0 1176.0,675.5 1171.0,671.5 1165.5,671.5 1160.5,675.5 1157.8,682.0 1132.0,682.0" fill="#a18a18" /><polygon points="1132.0,619.0 1197.8,619.0 1216.4,582.3 1225.7,586.0 1235.0,598.0 1243.0,606.0 1316.0,606.0 1320.0,595.5 1326.6,590.0 1343.9,578.0 1346.5,578.0 1346.5,615.5 1357.8,615.5 1357.8,627.4 1409.6,627.4 1409.6,682.0 1179.0,682.0 1176.0,675.5 1171.0,671.5 1165.5,671.5 1160.5,675.5 1157.8,682.0 1132.0,682.0" fill="url(#hSun)"/><polygon points="1132.0,619.0 1197.8,619.0 1216.4,582.3 1225.7,586.0 1235.0,598.0 1243.0,606.0 1316.0,606.0 1320.0,595.5 1326.6,590.0 1343.9,578.0 1346.5,578.0 1346.5,615.5 1357.8,615.5 1357.8,627.4 1409.6,627.4 1409.6,682.0 1179.0,682.0 1176.0,675.5 1171.0,671.5 1165.5,671.5 1160.5,675.5 1157.8,682.0 1132.0,682.0" fill="none" stroke="#0d0d0d" stroke-width="2.0" stroke-linejoin="round"/>
<polygon points="1179.0,682.0 1176.0,675.5 1171.0,671.5 1165.5,671.5 1160.5,675.5 1157.8,682.0" fill="#8a6e0c" /><polygon points="1179.0,682.0 1176.0,675.5 1171.0,671.5 1165.5,671.5 1160.5,675.5 1157.8,682.0" fill="none" stroke="#0d0d0d" stroke-width="1.5" stroke-linejoin="round"/>
<polygon points="1132.0,643.0 1201.0,643.0 1201.0,667.8 1132.0,667.8" fill="#86690a" /><polygon points="1132.0,643.0 1201.0,643.0 1201.0,667.8 1132.0,667.8" fill="none" stroke="#0d0d0d" stroke-width="2.0" stroke-linejoin="round"/>
<path d="M1133 663.500H1200" stroke="#a5861a" stroke-width="1.500"/><polygon points="1243.0,606.0 1253.6,604.8 1289.4,604.8 1316.0,606.0 1300.0,609.5 1255.0,609.5" fill="#d9a93a" /><polygon points="1243.0,606.0 1253.6,604.8 1289.4,604.8 1316.0,606.0 1300.0,609.5 1255.0,609.5" fill="none" stroke="#0d0d0d" stroke-width="1" stroke-linejoin="round"/>
<polygon points="1132.0,735.6 1409.6,735.6 1409.6,788.5 1357.0,788.5 1357.0,801.0 1344.5,801.0 1344.5,809.0 1328.6,813.0 1328.6,822.4 1310.0,834.0 1292.7,843.7 1259.5,843.7 1240.0,832.0 1225.0,820.0 1225.0,815.8 1207.7,811.8 1197.0,798.5 1132.0,798.5" fill="#a18a18" /><polygon points="1132.0,735.6 1409.6,735.6 1409.6,788.5 1357.0,788.5 1357.0,801.0 1344.5,801.0 1344.5,809.0 1328.6,813.0 1328.6,822.4 1310.0,834.0 1292.7,843.7 1259.5,843.7 1240.0,832.0 1225.0,820.0 1225.0,815.8 1207.7,811.8 1197.0,798.5 1132.0,798.5" fill="url(#hSun)"/><polygon points="1132.0,735.6 1409.6,735.6 1409.6,788.5 1357.0,788.5 1357.0,801.0 1344.5,801.0 1344.5,809.0 1328.6,813.0 1328.6,822.4 1310.0,834.0 1292.7,843.7 1259.5,843.7 1240.0,832.0 1225.0,820.0 1225.0,815.8 1207.7,811.8 1197.0,798.5 1132.0,798.5" fill="none" stroke="#0d0d0d" stroke-width="2.0" stroke-linejoin="round"/>
<polygon points="1359.5,581.0 1408.0,581.0 1409.6,583.0 1409.6,625.4 1408.0,627.4 1359.5,627.4 1357.8,625.4 1357.8,583.0" fill="#c2c6c1" /><polygon points="1359.5,581.0 1408.0,581.0 1409.6,583.0 1409.6,625.4 1408.0,627.4 1359.5,627.4 1357.8,625.4 1357.8,583.0" fill="url(#hB3)"/><polygon points="1359.5,581.0 1408.0,581.0 1409.6,583.0 1409.6,625.4 1408.0,627.4 1359.5,627.4 1357.8,625.4 1357.8,583.0" fill="none" stroke="#0d0d0d" stroke-width="2.0" stroke-linejoin="round"/>
<polygon points="1359.0,788.5 1408.0,788.5 1409.6,790.5 1409.6,834.4 1408.0,836.4 1359.0,836.4 1357.0,834.4 1357.0,790.5" fill="#c2c6c1" /><polygon points="1359.0,788.5 1408.0,788.5 1409.6,790.5 1409.6,834.4 1408.0,836.4 1359.0,836.4 1357.0,834.4 1357.0,790.5" fill="url(#hB3)"/><polygon points="1359.0,788.5 1408.0,788.5 1409.6,790.5 1409.6,834.4 1408.0,836.4 1359.0,836.4 1357.0,834.4 1357.0,790.5" fill="none" stroke="#0d0d0d" stroke-width="2.0" stroke-linejoin="round"/>
<clipPath id="cW"><rect x="1222" y="843" width="124.500" height="30.500"/></clipPath><g clip-path="url(#cW)"><rect x="1222" y="843" width="125" height="31" fill="#8fa0ad"/><polygon points="1226,845 1262,845 1346,868 1346,874 1290,874 1226,856" fill="#e6f0f6"/><polygon points="1262,845 1300,845 1346,858 1346,868" fill="#9db0bd"/><polygon points="1226,856 1290,874 1226,874" fill="#71838f"/><polygon points="1300,845 1346,845 1346,858" fill="#c5d6e0"/></g><polygon points="1213.7,846.0 1222.0,846.0 1222.0,873.5 1213.7,873.5" fill="#b5650a" /><polygon points="1213.7,846.0 1222.0,846.0 1222.0,873.5 1213.7,873.5" fill="none" stroke="#0d0d0d" stroke-width="1" stroke-linejoin="round"/>
<polygon points="1346.5,801.0 1357.0,801.0 1357.0,873.5 1346.5,873.5" fill="#d47c10" /><polygon points="1346.5,801.0 1357.0,801.0 1357.0,873.5 1346.5,873.5" fill="none" stroke="#0d0d0d" stroke-width="1.5" stroke-linejoin="round"/>
<polygon points="1171.0,798.5 1197.0,798.5 1207.7,811.8 1211.0,825.0 1213.7,839.7 1213.7,873.5 1357.8,873.5 1357.8,881.5 1171.0,881.5" fill="#ee8a10" /><polygon points="1171.0,798.5 1197.0,798.5 1207.7,811.8 1211.0,825.0 1213.7,839.7 1213.7,873.5 1357.8,873.5 1357.8,881.5 1171.0,881.5" fill="none" stroke="#0d0d0d" stroke-width="2" stroke-linejoin="round"/>
<circle cx="1124.800" cy="713.500" r="4.200" fill="#e8e8e8" stroke="#222" stroke-width="1.200"/><circle cx="1124.800" cy="713.500" r="1.300" fill="#222"/></svg><svg id="vcube" style="position:absolute;left:2360px;top:160px" width="200" height="200" viewBox="2360 160 200 200">
<path d="M2462.500 187l7.200-8.500 7.200 8.500z" fill="#e3e9ef"/>
<path d="M2462.500 318l7.200 8.500 7.200-8.500z" fill="#e3e9ef"/>
<path d="M2405 246.500l-9.500 6.300 9.500 6.300z" fill="#e3e9ef"/>
<path d="M2535 246.500l9.500 6.300-9.500 6.300z" fill="#e3e9ef"/>
<path d="M2447 187q-15 5-25 17" fill="none" stroke="#e3e9ef" stroke-width="4.500"/><path d="M2416 212l1.500-13 9 7z" fill="#e3e9ef"/>
<path d="M2492 187q15 5 25 17" fill="none" stroke="#e3e9ef" stroke-width="4.500"/><path d="M2523 212l-1.500-13-9 7z" fill="#e3e9ef"/>
<path d="M2452 224.600h37l10 10v37l-10 10h-37l-10-10v-37z" fill="#e3e9ef"/>
<circle cx="2443.500" cy="226.500" r="6" fill="#fff"/><circle cx="2497.500" cy="226.500" r="6" fill="#fff"/><circle cx="2443.500" cy="279.500" r="6" fill="#fff"/><circle cx="2497.500" cy="279.500" r="6" fill="#fff"/>
<rect x="2447.500" y="229.500" width="45" height="46" rx="9" fill="#fff"/>
<text x="2469.500" y="258" font-size="13.500" fill="#222" text-anchor="middle" font-family="Liberation Sans,sans-serif" textLength="21" lengthAdjust="spacingAndGlyphs">Left</text>
<path d="M2500.500 224.600V283" stroke="#2a2ab8" stroke-width="1.500"/>
<path d="M2442 283h59" stroke="#4caf50" stroke-width="1.500"/>
<text x="2496" y="220" font-size="13" font-weight="700" fill="#2a2ab8" font-family="Liberation Sans,sans-serif" textLength="8" lengthAdjust="spacingAndGlyphs">Z</text>
<text x="2427" y="288" font-size="13" font-weight="700" fill="#4caf50" font-family="Liberation Sans,sans-serif" textLength="8" lengthAdjust="spacingAndGlyphs">Y</text>
<path d="M2506.500 314.500l8.500-4 8.500 4v9l-8.500 4.500-8.500-4.500z" fill="#e8e8e8" stroke="#555" stroke-width="1.200" stroke-linejoin="round"/><path d="M2506.500 314.500l8.500 4v9.500l-8.500-4.500z" fill="#999"/><path d="M2515 318.500l8.500-4v9l-8.500 4.500z" fill="#ddd"/><path d="M2506.500 314.500l8.500-4 8.500 4-8.500 4z" fill="#fafafa"/>
<path d="M2531.500 316h8l-4 4.500z" fill="#222"/>
</svg><div id="rpanel">
<div class="rc" style="top:0px"><svg width="24" height="24" viewBox="0 0 24 24"><rect x="4" y="4" width="16" height="16" rx="2.500" fill="none" stroke="#3a3a3a" stroke-width="1.400"/><path d="M7.500 8h9M9.500 11h7M9.500 14h7M9.500 17h7" stroke="#3a3a3a" stroke-width="1.500"/></svg></div>
<div class="rc" style="top:33px"><svg width="24" height="24" viewBox="0 0 24 24"><path d="M7 11l6-2.500 6 2.500v6.500l-6 3-6-3zM7 11l6 3 6-3M13 14v6.500" fill="#fff" stroke="#3a3a3a" stroke-width="1.300"/><rect x="3" y="3" width="9" height="7" fill="#1b5eb8"/><path d="M3 6.500h9M6 3v7M9 3v7" stroke="#fff" stroke-width=".8"/></svg></div>
<div class="rc" style="top:66px"><svg width="24" height="24" viewBox="0 0 24 24"><rect x="4" y="4" width="5" height="5" fill="#aaa" stroke="#777"/><path d="M8 11l4 1" stroke="#1b5eb8" stroke-width="1.500" stroke-dasharray="1.500 1"/><path d="M14 10h6v10H10v-5h4z" fill="#fff" stroke="#777" stroke-width="1.300"/><path d="M16 12v5h-6" fill="none" stroke="#777"/></svg></div>
<div class="rc" style="top:99px"><svg width="24" height="24" viewBox="0 0 24 24"><rect x="4" y="14" width="16" height="7" fill="#fff" stroke="#3a3a3a" stroke-width="1.300"/><rect x="13.500" y="4" width="7" height="14" fill="none" stroke="#1b5eb8" stroke-width="1.300" stroke-dasharray="2 1.500"/><circle cx="17" cy="17.500" r="2.500" fill="none" stroke="#1b5eb8" stroke-width="1.200"/></svg></div>
<div class="rc" style="top:132px"><svg width="24" height="24" viewBox="0 0 24 24"><polygon points="12,3 20,9 17,19 7,19 4,9" fill="#bbb"/><polygon points="12,3 12,11 4,9" fill="#9ccfec"/><polygon points="12,3 20,9 12,11" fill="#c7e3f3"/><polygon points="4,9 12,11 7,19" fill="#1b4fa0"/><polygon points="12,11 7,19 12,19" fill="#2f6fc4"/><polygon points="12,11 17,19 20,9" fill="#999"/></svg></div>
<div class="rc" style="top:165px"><svg width="24" height="24" viewBox="0 0 24 24"><rect x="4" y="2" width="9" height="8" fill="#3a3a3a"/><path d="M4 4.700h9M4 7.300h9M7 2v8M10 2v8" stroke="#fff" stroke-width=".8"/><text x="3" y="21" font-size="16" font-weight="700" font-style="italic" fill="#3a3a3a" font-family="Liberation Serif,serif">(x)</text></svg></div>
</div>
<svg style="position:absolute;left:2459px;top:1346px" width="22" height="20" viewBox="0 0 22 20"><path d="M2 12h14v5H2z" fill="#fff" stroke="#3a3a3a" stroke-width="1.300"/><ellipse cx="13" cy="8" rx="5.500" ry="3.500" fill="#bbb" stroke="#3a3a3a" stroke-width="1.300"/><path d="M7.500 8v5M18.500 8v6" stroke="#3a3a3a" stroke-width="1.300"/><path d="M4.500 14v3M7 14v3M9.500 14v3M12 14v3" stroke="#3a3a3a" stroke-width=".8"/></svg>
<svg style="position:absolute;left:2493px;top:1346px" width="24" height="20" viewBox="0 0 24 20"><path d="M2 17a10 10 0 0 1 20 0z" fill="#ccc" stroke="#3a3a3a" stroke-width="1.400"/><path d="M6 17a6 6 0 0 1 12 0" fill="#fff" stroke="#3a3a3a" stroke-width="1.200"/></svg>
<svg style="position:absolute;left:2530px;top:1346px" width="20" height="20" viewBox="0 0 20 20"><path d="M10 2v13M3 4h14M2 16.500h16" stroke="#3a3a3a" stroke-width="1.600"/><path d="M5 4l-2.500 7h5zM15 4l-2.500 7h5z" fill="#fff" stroke="#3a3a3a" stroke-width="1.100"/></svg>
<svg style="position:absolute;left:2116px;top:627px" width="14" height="21" viewBox="0 0 14 21"><path d="M1 1v15.500l3.700-3.500 2.600 6.200 2.300-1-2.600-6 5-.2z" fill="#fff" stroke="#222" stroke-width="1"/></svg><div id="btabs">
<div class="bt" style="left:78px"><svg width="18" height="18" viewBox="0 0 18 18"><path d="M2.500 6.500l3-1.500 3 1.500v9.500h-6z" fill="#fff" stroke="#3a3a3a" stroke-width="1.200" stroke-linejoin="round"/><path d="M8.500 4l3.500-2 3.500 2v12h-7z" fill="#fff" stroke="#3a3a3a" stroke-width="1.200" stroke-linejoin="round"/></svg><span>Part Studio 1</span></div>
<div class="bt" style="left:280px"><svg width="18" height="18" viewBox="0 0 18 18"><path d="M2.500 6.500l3-1.500 3 1.500v9.500h-6z" fill="#fff" stroke="#3a3a3a" stroke-width="1.200" stroke-linejoin="round"/><path d="M8.500 4l3.500-2 3.500 2v12h-7z" fill="#fff" stroke="#3a3a3a" stroke-width="1.200" stroke-linejoin="round"/></svg><span>Part Studio 6</span></div>
<div class="bt" style="left:482px"><svg width="18" height="18" viewBox="0 0 18 18"><path d="M2.500 6.500l3-1.500 3 1.500v9.500h-6z" fill="#fff" stroke="#3a3a3a" stroke-width="1.200" stroke-linejoin="round"/><path d="M8.500 4l3.500-2 3.500 2v12h-7z" fill="#fff" stroke="#3a3a3a" stroke-width="1.200" stroke-linejoin="round"/></svg><span>Part Studio 2</span></div>
<div class="bt" style="left:684px"><svg width="18" height="18" viewBox="0 0 18 18"><path d="M2.500 6.500l3-1.500 3 1.500v9.500h-6z" fill="#fff" stroke="#3a3a3a" stroke-width="1.200" stroke-linejoin="round"/><path d="M8.500 4l3.500-2 3.500 2v12h-7z" fill="#fff" stroke="#3a3a3a" stroke-width="1.200" stroke-linejoin="round"/></svg><span>Part Studio 7</span></div>
<div class="bt" style="left:886px"><svg width="18" height="18" viewBox="0 0 18 18"><path d="M2.500 6.500l3-1.500 3 1.500v9.500h-6z" fill="#fff" stroke="#3a3a3a" stroke-width="1.200" stroke-linejoin="round"/><path d="M8.500 4l3.500-2 3.500 2v12h-7z" fill="#fff" stroke="#3a3a3a" stroke-width="1.200" stroke-linejoin="round"/></svg><span>Part Studio 3</span></div>
<div class="bt act" style="left:1088px"><svg width="18" height="18" viewBox="0 0 18 18"><rect x="2" y="2" width="11" height="11" rx="1.500" fill="#fff" stroke="#3a3a3a" stroke-width="1.200"/><rect x="5" y="5" width="11" height="11" rx="1.500" fill="#777" stroke="#3a3a3a" stroke-width="1.200"/></svg><span>Assembly 1</span></div>
<div class="bt" style="left:1290px"><svg width="18" height="18" viewBox="0 0 18 18"><path d="M2.500 6.500l3-1.500 3 1.500v9.500h-6z" fill="#fff" stroke="#3a3a3a" stroke-width="1.200" stroke-linejoin="round"/><path d="M8.500 4l3.500-2 3.500 2v12h-7z" fill="#fff" stroke="#3a3a3a" stroke-width="1.200" stroke-linejoin="round"/></svg><span>Part Studio 5</span></div>
<div class="bt" style="left:1492px"><svg width="18" height="18" viewBox="0 0 18 18"><path d="M2.500 6.500l3-1.500 3 1.500v9.500h-6z" fill="#fff" stroke="#3a3a3a" stroke-width="1.200" stroke-linejoin="round"/><path d="M8.500 4l3.500-2 3.500 2v12h-7z" fill="#fff" stroke="#3a3a3a" stroke-width="1.200" stroke-linejoin="round"/></svg><span>Part Studio 4</span></div>
<svg style="position:absolute;left:9px;top:6px" width="22" height="18" viewBox="0 0 22 18"><path d="M1 2h11v7H1z" fill="#3a3a3a"/><circle cx="13" cy="10" r="4" fill="#ebebeb" stroke="#3a3a3a" stroke-width="1.700"/><path d="M16 13l4 4" stroke="#3a3a3a" stroke-width="2"/></svg>
<svg style="position:absolute;left:50px;top:6px" width="14" height="14" viewBox="0 0 14 14"><path d="M7 1v12M1 7h12" stroke="#3a3a3a" stroke-width="1.800"/></svg>
</div><div id="bstrip"></div><svg id="ovl" style="position:absolute;left:0;top:0" width="2560" height="1440" viewBox="0 0 2560 1440">
<defs><filter id="sh" x="-10%" y="-20%" width="125%" height="150%"><feGaussianBlur in="SourceAlpha" stdDeviation="3.500"/><feOffset dx="5" dy="6"/><feComponentTransfer><feFuncA type="linear" slope=".6"/></feComponentTransfer><feMerge><feMergeNode/><feMergeNode in="SourceGraphic"/></feMerge></filter>
<filter id="fat" x="-3%" y="-10%" width="106%" height="125%"><feMorphology operator="dilate" radius="2.100 0.300" result="d"/><feGaussianBlur in="d" stdDeviation="0.500" result="b"/><feOffset in="b" dx="1.600" dy="1.300" result="o"/><feColorMatrix in="o" type="matrix" values="0 0 0 0 .16  0 0 0 0 .37  0 0 0 0 .52  0 0 0 .75 0" result="sd"/><feMerge><feMergeNode in="sd"/><feMergeNode in="b"/></feMerge></filter>
<linearGradient id="wmG" x1="0" y1="0" x2="1" y2="1"><stop offset="0" stop-color="#6db3da"/><stop offset=".35" stop-color="#8fc6e4"/><stop offset=".55" stop-color="#5fa9d3"/><stop offset=".75" stop-color="#a6d6ee"/><stop offset="1" stop-color="#58a3cf"/></linearGradient>
<linearGradient id="wmG2" x1="0" y1="0" x2="1" y2="0"><stop offset="0" stop-color="#5aa5d0"/><stop offset=".3" stop-color="#93c6e2"/><stop offset=".62" stop-color="#b3dcf2"/><stop offset=".8" stop-color="#7fbcdf"/><stop offset="1" stop-color="#5aa5d0"/></linearGradient>
<linearGradient id="wmL" x1="0" y1="0" x2="1" y2="0"><stop offset="0" stop-color="#5aa3ce"/><stop offset=".55" stop-color="#86bfdf"/><stop offset="1" stop-color="#5ea6d0"/></linearGradient>
<pattern id="trace" patternUnits="userSpaceOnUse" width="5" height="5" patternTransform="rotate(45)"><rect width="5" height="5" fill="#6f9fdc"/><path d="M0 2.500H5" stroke="#4f7fc8" stroke-width="1.600"/></pattern>
</defs>
<g filter="url(#sh)" fill="#fff" stroke="#fff" stroke-width="1.200" font-family="Liberation Sans,sans-serif" font-weight="700">
<text x="1222.300" y="677.400" font-size="51.500" textLength="227" lengthAdjust="spacingAndGlyphs">STAGE 1</text>
<text x="1295" y="758.300" font-size="51.500" textLength="79.500" lengthAdjust="spacingAndGlyphs">4:1</text>
<text x="1536.300" y="677.400" font-size="51.500" textLength="236.500" lengthAdjust="spacingAndGlyphs">STAGE 2</text>
<text x="1610" y="758.300" font-size="51.500" textLength="79.500" lengthAdjust="spacingAndGlyphs">4:1</text>
</g>
<g>
<path d="M28.500 1387.500H62.200V1261H27.200V1386z" fill="#2c5c7c" opacity=".55" transform="translate(1.500 1.500)"/>
<rect x="27.200" y="1260" width="35" height="127" fill="url(#wmL)" opacity=".93"/>
<rect x="130" y="1260" width="36" height="129" fill="#2c5c7c" opacity=".5" transform="translate(1.500 1.500)"/>
<rect x="130" y="1260" width="36" height="129" fill="#8ec6e6" opacity=".93"/>
<polygon points="62.200,1260.500 88.900,1287.200 103.300,1287.200 130,1260.500 130,1294.400 105.600,1321.100 91.100,1322.200 62.200,1294.400" fill="url(#trace)" opacity=".9"/>
<polygon points="62.200,1294.400 91.100,1322.200 105.600,1321.100 130,1294.400 130,1297.500 106,1324 90.500,1325 62.200,1297.500" fill="#4a86b0" opacity=".8"/>
<rect x="87.200" y="1288.300" width="17.200" height="28.400" rx="1.500" fill="#7db7de"/>
<rect x="88.900" y="1292.800" width="13.900" height="21.600" fill="#565a5e"/>
<g font-family="Liberation Serif,serif" font-size="7.200" font-weight="700" fill="#23465f"><text x="133" y="1268.0" textLength="30" lengthAdjust="spacingAndGlyphs">10100101</text><text x="133" y="1275.5" textLength="30" lengthAdjust="spacingAndGlyphs">01100010</text><text x="133" y="1282.9" textLength="30" lengthAdjust="spacingAndGlyphs">11101101</text><text x="133" y="1290.3" textLength="30" lengthAdjust="spacingAndGlyphs">00011101</text><text x="133" y="1297.8" textLength="30" lengthAdjust="spacingAndGlyphs">10111010</text><text x="133" y="1305.2" textLength="30" lengthAdjust="spacingAndGlyphs">11011111</text><text x="133" y="1312.7" textLength="30" lengthAdjust="spacingAndGlyphs">00011011</text><text x="133" y="1320.2" textLength="30" lengthAdjust="spacingAndGlyphs">10110001</text><text x="133" y="1327.6" textLength="30" lengthAdjust="spacingAndGlyphs">10100001</text><text x="133" y="1335.0" textLength="30" lengthAdjust="spacingAndGlyphs">11111000</text><text x="133" y="1342.5" textLength="30" lengthAdjust="spacingAndGlyphs">01001001</text><text x="133" y="1350.0" textLength="30" lengthAdjust="spacingAndGlyphs">00001110</text><text x="133" y="1357.4" textLength="30" lengthAdjust="spacingAndGlyphs">10111001</text><text x="133" y="1364.8" textLength="30" lengthAdjust="spacingAndGlyphs">11101100</text><text x="133" y="1372.3" textLength="30" lengthAdjust="spacingAndGlyphs">10110101</text><text x="133" y="1379.8" textLength="30" lengthAdjust="spacingAndGlyphs">00110110</text><text x="133" y="1387.2" textLength="30" lengthAdjust="spacingAndGlyphs">10101101</text></g>
<rect x="36.700" y="1277" width="3" height="25" fill="#8a5a2a"/><rect x="49.300" y="1277" width="3" height="25" fill="#8a5a2a"/>
<rect x="39.700" y="1277" width="9.600" height="12" fill="#d9e6ec"/><rect x="39.700" y="1289" width="9.600" height="13" fill="#f3edc8"/>
<path d="M44.500 1266v10M41 1272h7" stroke="#446" stroke-width="1"/><path d="M31 1272h6" stroke="#3fb4f0" stroke-width="2"/><path d="M50 1271h6" stroke="#eef" stroke-width="2"/>
<path d="M42 1290h5l1.500 24h-8z" fill="#f4f4f0" opacity=".95"/>
<circle cx="43.900" cy="1322.200" r="13.300" fill="#e9e2cc" stroke="#b9b29c" stroke-width="1"/><circle cx="44.500" cy="1313" r="4.200" fill="#f1ecd8" stroke="#ccc" stroke-width=".8"/><circle cx="43.900" cy="1323" r="2.600" fill="#7fbfe4" stroke="#e8f2f8" stroke-width="1.200"/>
<path d="M31.500 1328L41 1356M56.500 1327L53 1353" stroke="#3a3a3a" stroke-width="1.300"/>
<circle cx="48.300" cy="1358.300" r="9.300" fill="#9a9ea0" stroke="#7d8386" stroke-width="3" stroke-dasharray="1.800 1.500"/><circle cx="48.300" cy="1358.300" r="5.800" fill="#e4dfcc"/>
<circle cx="36.700" cy="1373.300" r="4.600" fill="#8fa6b4" stroke="#7d8a92" stroke-width="2.200" stroke-dasharray="1.400 1.100"/><circle cx="36.700" cy="1373.300" r="1.600" fill="#cfe0ea"/>
</g>
<g font-family="Liberation Sans,sans-serif" font-weight="700" filter="url(#fat)" opacity=".93">
<text transform="translate(223.500 1314.600) scale(.5 1)" x="0" y="0" font-size="64.500" fill="url(#wmG)" textLength="280" lengthAdjust="spacingAndGlyphs">How To</text>
<text transform="translate(172 1387.900) scale(.5 1)" x="0" y="0" font-size="63.500" fill="url(#wmG2)" textLength="514" lengthAdjust="spacingAndGlyphs">ECHATRONICS</text>
</g>
<text x="28" y="1418.200" font-family="Liberation Mono,monospace" font-size="27" fill="#2e2e2e" textLength="406" lengthAdjust="spacing">www.HowToMechatronics.com</text>
</svg></body></html>
